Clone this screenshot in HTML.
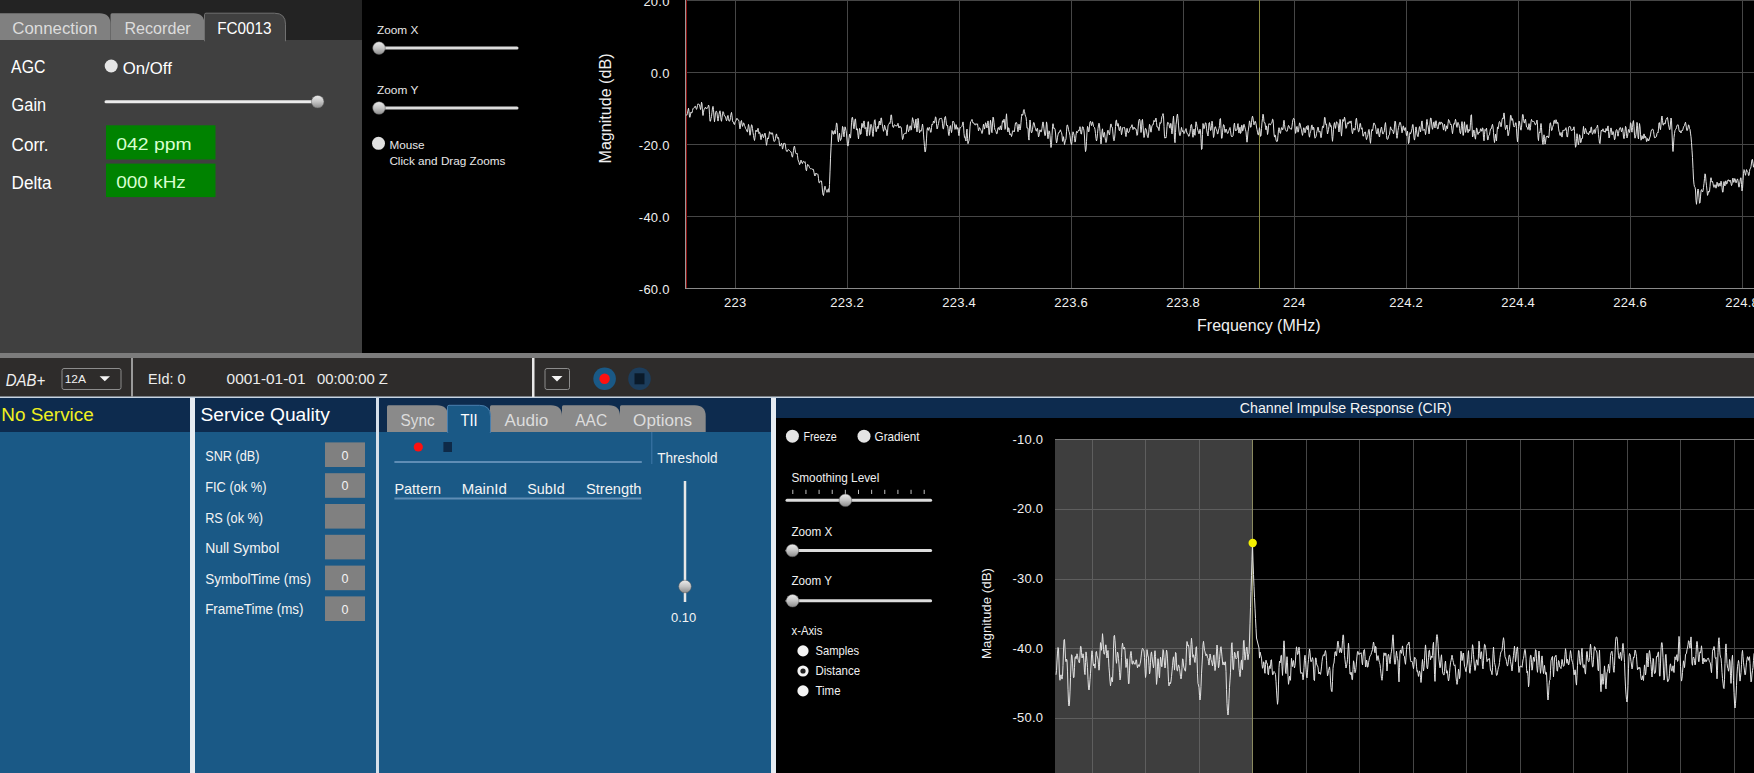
<!DOCTYPE html>
<html><head><meta charset="utf-8"><title>DAB</title>
<style>
*{margin:0;padding:0}
html,body{width:1754px;height:773px;overflow:hidden;background:#000}
svg{display:block;font-family:"Liberation Sans", sans-serif}
</style></head><body>
<svg width="1754" height="773" viewBox="0 0 1754 773">
<defs>
<linearGradient id="thumbg" x1="0" y1="0" x2="0" y2="1">
<stop offset="0" stop-color="#ececec"/><stop offset="0.5" stop-color="#c4c4c4"/><stop offset="1" stop-color="#8c8c8c"/>
</linearGradient>
<clipPath id="topclip"><rect x="686" y="0" width="1068" height="289"/></clipPath>
<clipPath id="circlip"><rect x="1055" y="439" width="699" height="334"/></clipPath>
</defs>
<rect x="0" y="0" width="362" height="40" fill="#232323"/>
<rect x="0" y="40" width="362" height="313" fill="#404040"/>
<path d="M-10,40 L-10,14.7 Q-10,13.2 -8.5,13.2 L99.5,13.2 Q110.5,13.2 110.5,24.2 L110.5,40 Z" fill="#808080"/>
<path d="M110.5,40 L110.5,14.7 Q110.5,13.2 112.0,13.2 L193.5,13.2 Q204.5,13.2 204.5,24.2 L204.5,40 Z" fill="#808080"/>
<path d="M204.5,41 L204.5,14.7 Q204.5,13.2 206.0,13.2 L274.5,13.2 Q285.5,13.2 285.5,24.2 L285.5,41 Z" fill="#404040" stroke="#707070" stroke-width="1"/>
<rect x="205" y="39.5" width="80" height="3" fill="#404040"/>
<text x="12.3" y="34.2" font-size="16.8" fill="#dcdcdc" textLength="85.2" lengthAdjust="spacingAndGlyphs">Connection</text>
<text x="124.5" y="34.2" font-size="16.8" fill="#dcdcdc" textLength="66.2" lengthAdjust="spacingAndGlyphs">Recorder</text>
<text x="217.2" y="34.2" font-size="16.8" fill="#ffffff" textLength="54.4" lengthAdjust="spacingAndGlyphs">FC0013</text>
<text x="11.1" y="73.2" font-size="18.7" fill="#fff" textLength="34.3" lengthAdjust="spacingAndGlyphs">AGC</text>
<circle cx="111.2" cy="66.0" r="6.5" fill="#e6e6e6"/>
<text x="122.8" y="73.7" font-size="15.6" fill="#fff" textLength="49" lengthAdjust="spacingAndGlyphs">On/Off</text>
<text x="11.6" y="111" font-size="18.7" fill="#fff" textLength="34.5" lengthAdjust="spacingAndGlyphs">Gain</text>
<line x1="106" y1="101.7" x2="312" y2="101.7" stroke="#ececec" stroke-width="3" stroke-linecap="round"/><circle cx="317.7" cy="101.7" r="6.3" fill="url(#thumbg)" stroke="#5a5a5a" stroke-width="0.5"/>
<text x="11.6" y="151.3" font-size="18.7" fill="#fff" textLength="37" lengthAdjust="spacingAndGlyphs">Corr.</text>
<text x="11.6" y="188.9" font-size="18.7" fill="#fff" textLength="40" lengthAdjust="spacingAndGlyphs">Delta</text>
<rect x="106" y="125.3" width="109.5" height="34.2" fill="#008200"/>
<rect x="106" y="163.6" width="109.5" height="33.5" fill="#008200"/>
<text x="116.3" y="149.9" font-size="17.2" fill="#d8ffd0" textLength="75.3" lengthAdjust="spacingAndGlyphs">042 ppm</text>
<text x="116.3" y="187.5" font-size="17.2" fill="#d8ffd0" textLength="69.5" lengthAdjust="spacingAndGlyphs">000 kHz</text>
<rect x="362" y="0" width="1392" height="353" fill="#000000"/>
<text x="377" y="34" font-size="11.6" fill="#e8e8e8" textLength="41.4" lengthAdjust="spacingAndGlyphs">Zoom X</text>
<line x1="385" y1="48.1" x2="517" y2="48.1" stroke="#dcdcdc" stroke-width="3" stroke-linecap="round"/><circle cx="379" cy="48.1" r="6.3" fill="url(#thumbg)" stroke="#5a5a5a" stroke-width="0.5"/>
<text x="377" y="93.7" font-size="11.6" fill="#e8e8e8" textLength="41.4" lengthAdjust="spacingAndGlyphs">Zoom Y</text>
<line x1="385" y1="108" x2="517" y2="108" stroke="#dcdcdc" stroke-width="3" stroke-linecap="round"/><circle cx="379" cy="108" r="6.3" fill="url(#thumbg)" stroke="#5a5a5a" stroke-width="0.5"/>
<circle cx="378.5" cy="143.3" r="6.5" fill="#e0e0e0"/>
<text x="389.4" y="148.5" font-size="11.6" fill="#e8e8e8" textLength="35.2" lengthAdjust="spacingAndGlyphs">Mouse</text>
<text x="389.4" y="164.5" font-size="11.6" fill="#e8e8e8" textLength="116" lengthAdjust="spacingAndGlyphs">Click and Drag Zooms</text>
<line x1="735.5" y1="0" x2="735.5" y2="288" stroke="#464646" stroke-width="1"/><line x1="847.5" y1="0" x2="847.5" y2="288" stroke="#464646" stroke-width="1"/><line x1="959.5" y1="0" x2="959.5" y2="288" stroke="#464646" stroke-width="1"/><line x1="1071.5" y1="0" x2="1071.5" y2="288" stroke="#464646" stroke-width="1"/><line x1="1183.5" y1="0" x2="1183.5" y2="288" stroke="#464646" stroke-width="1"/><line x1="1294.5" y1="0" x2="1294.5" y2="288" stroke="#464646" stroke-width="1"/><line x1="1406.5" y1="0" x2="1406.5" y2="288" stroke="#464646" stroke-width="1"/><line x1="1518.5" y1="0" x2="1518.5" y2="288" stroke="#464646" stroke-width="1"/><line x1="1630.5" y1="0" x2="1630.5" y2="288" stroke="#464646" stroke-width="1"/><line x1="1742.5" y1="0" x2="1742.5" y2="288" stroke="#464646" stroke-width="1"/><line x1="686" y1="0.5" x2="1754" y2="0.5" stroke="#464646" stroke-width="1"/><line x1="686" y1="72.5" x2="1754" y2="72.5" stroke="#464646" stroke-width="1"/><line x1="686" y1="144.5" x2="1754" y2="144.5" stroke="#464646" stroke-width="1"/><line x1="686" y1="216.5" x2="1754" y2="216.5" stroke="#464646" stroke-width="1"/><line x1="686" y1="288.5" x2="1754" y2="288.5" stroke="#8a8a8a" stroke-width="1"/>
<line x1="685.5" y1="0" x2="685.5" y2="289" stroke="#9a9a9a" stroke-width="1"/>
<line x1="686.5" y1="0" x2="686.5" y2="288" stroke="#8a1010" stroke-width="1"/>
<line x1="1259.5" y1="0" x2="1259.5" y2="288" stroke="#8a8a40" stroke-width="1"/>
<polyline points="686.0,114.5 686.5,115.3 687.0,114.8 687.5,113.3 688.0,110.2 688.5,108.2 689.0,111.6 689.5,117.0 690.0,117.4 690.5,113.8 691.0,112.1 691.5,113.0 692.0,112.8 692.5,110.6 693.0,108.6 693.5,108.1 694.0,108.1 694.5,107.5 695.0,106.2 695.5,106.3 696.0,108.2 696.5,109.4 697.0,108.1 697.5,105.4 698.0,103.7 698.5,104.1 699.0,104.7 699.5,104.8 700.0,107.0 700.5,109.5 701.0,107.2 701.5,102.2 702.0,103.9 702.5,111.9 703.0,115.5 703.5,112.3 704.0,109.3 704.5,109.1 705.0,108.0 705.5,107.1 706.0,108.0 706.5,109.0 707.0,108.4 707.5,108.0 708.0,107.2 708.5,105.0 709.0,106.2 709.5,114.2 710.0,121.3 710.5,121.1 711.0,118.6 711.5,116.6 712.0,112.4 712.5,107.8 713.0,106.4 713.5,109.5 714.0,117.1 714.5,121.8 715.0,118.0 715.5,112.6 716.0,111.3 716.5,111.3 717.0,112.9 717.5,118.3 718.0,121.1 718.5,118.3 719.0,114.5 719.5,111.9 720.0,110.8 720.5,114.1 721.0,119.8 721.5,121.3 722.0,117.7 722.5,113.6 723.0,111.6 723.5,112.3 724.0,114.7 724.5,116.0 725.0,116.1 725.5,116.9 726.0,119.0 726.5,120.8 727.0,119.5 727.5,115.9 728.0,115.4 728.5,118.5 729.0,121.1 729.5,121.2 730.0,120.1 730.5,117.5 731.0,114.1 731.5,112.4 732.0,115.7 732.5,120.8 733.0,122.1 733.5,122.2 734.0,124.2 734.5,124.5 735.0,122.2 735.5,121.3 736.0,120.5 736.5,118.8 737.0,118.2 737.5,119.4 738.0,120.0 738.5,119.9 739.0,121.4 739.5,125.9 740.0,128.9 740.5,125.9 741.0,121.2 741.5,120.5 742.0,124.0 742.5,126.4 743.0,125.1 743.5,122.8 744.0,123.6 744.5,125.6 745.0,126.7 745.5,128.4 746.0,129.2 746.5,129.8 747.0,131.7 747.5,131.9 748.0,127.8 748.5,124.4 749.0,126.5 749.5,132.1 750.0,135.3 750.5,132.9 751.0,128.0 751.5,124.8 752.0,125.2 752.5,128.7 753.0,132.5 753.5,135.3 754.0,138.5 754.5,140.5 755.0,137.5 755.5,132.4 756.0,130.0 756.5,130.7 757.0,131.8 757.5,130.2 758.0,128.3 758.5,130.7 759.0,133.7 759.5,132.4 760.0,132.6 760.5,137.2 761.0,139.7 761.5,137.2 762.0,134.2 762.5,134.3 763.0,136.5 763.5,137.7 764.0,136.1 764.5,133.8 765.0,133.1 765.5,135.9 766.0,141.6 766.5,145.3 767.0,142.6 767.5,138.0 768.0,138.2 768.5,138.9 769.0,135.2 769.5,131.7 770.0,132.2 770.5,133.7 771.0,134.4 771.5,134.0 772.0,132.6 772.5,133.1 773.0,135.6 773.5,139.2 774.0,141.4 774.5,141.3 775.0,140.5 775.5,138.4 776.0,135.1 776.5,133.9 777.0,136.3 777.5,138.3 778.0,138.0 778.5,137.5 779.0,140.6 779.5,144.9 780.0,146.1 780.5,145.6 781.0,144.3 781.5,143.2 782.0,145.6 782.5,149.1 783.0,147.5 783.5,143.7 784.0,143.0 784.5,143.4 785.0,143.3 785.5,146.1 786.0,149.7 786.5,151.1 787.0,151.7 787.5,151.2 788.0,149.7 788.5,149.5 789.0,150.3 789.5,150.5 790.0,151.2 790.5,151.6 791.0,151.8 791.5,153.5 792.0,156.3 792.5,157.2 793.0,154.2 793.5,150.3 794.0,147.0 794.5,146.1 795.0,149.1 795.5,152.4 796.0,153.6 796.5,153.4 797.0,153.0 797.5,155.6 798.0,159.8 798.5,161.0 799.0,162.3 799.5,164.7 800.0,164.1 800.5,161.5 801.0,160.1 801.5,161.1 802.0,163.2 802.5,163.5 803.0,161.7 803.5,161.3 804.0,162.1 804.5,162.3 805.0,161.7 805.5,164.4 806.0,169.7 806.5,170.8 807.0,167.2 807.5,164.5 808.0,164.5 808.5,165.0 809.0,166.2 809.5,167.5 810.0,168.4 810.5,168.7 811.0,168.5 811.5,168.7 812.0,169.3 812.5,169.3 813.0,168.9 813.5,169.9 814.0,172.5 814.5,175.0 815.0,176.0 815.5,174.4 816.0,173.0 816.5,173.8 817.0,174.4 817.5,173.8 818.0,174.7 818.5,178.7 819.0,182.7 819.5,182.8 820.0,181.2 820.5,181.1 821.0,181.0 821.5,181.0 822.0,185.3 822.5,191.0 823.0,194.6 823.5,195.5 824.0,192.3 824.5,187.4 825.0,186.2 825.5,188.6 826.0,189.9 826.5,190.9 827.0,192.4 827.5,191.8 828.0,189.1 828.5,188.8 829.0,192.3 829.5,184.5 830.0,171.9 830.5,158.2 831.0,147.8 831.5,139.0 832.0,130.5 832.5,131.8 833.0,134.0 833.5,134.3 834.0,131.2 834.5,130.6 835.0,134.0 835.5,133.6 836.0,127.4 836.5,122.9 837.0,124.0 837.5,130.6 838.0,139.5 838.5,141.9 839.0,136.0 839.5,133.2 840.0,138.1 840.5,140.5 841.0,139.3 841.5,137.7 842.0,132.8 842.5,126.4 843.0,127.2 843.5,134.3 844.0,136.8 844.5,131.5 845.0,126.8 845.5,128.0 846.0,130.5 846.5,133.9 847.0,140.0 847.5,145.3 848.0,146.1 848.5,143.3 849.0,137.8 849.5,134.1 850.0,136.8 850.5,138.1 851.0,131.9 851.5,122.8 852.0,117.8 852.5,117.2 853.0,120.8 853.5,126.8 854.0,128.8 854.5,124.9 855.0,119.3 855.5,119.0 856.0,125.1 856.5,130.1 857.0,128.8 857.5,128.9 858.0,135.4 858.5,138.9 859.0,134.0 859.5,128.4 860.0,129.5 860.5,134.4 861.0,134.0 861.5,126.9 862.0,123.3 862.5,126.3 863.0,127.6 863.5,123.6 864.0,120.9 864.5,124.3 865.0,128.8 865.5,128.2 866.0,127.4 866.5,132.8 867.0,136.1 867.5,129.9 868.0,121.7 868.5,121.8 869.0,129.4 869.5,135.4 870.0,132.8 870.5,126.3 871.0,124.3 871.5,125.4 872.0,127.9 872.5,133.6 873.0,136.5 873.5,131.4 874.0,124.6 874.5,120.3 875.0,119.7 875.5,125.4 876.0,131.8 876.5,131.4 877.0,127.5 877.5,126.5 878.0,128.7 878.5,127.4 879.0,121.9 879.5,121.0 880.0,125.0 880.5,123.6 881.0,117.9 881.5,118.1 882.0,123.1 882.5,126.2 883.0,128.8 883.5,131.3 884.0,129.1 884.5,125.2 885.0,126.8 885.5,129.5 886.0,129.3 886.5,131.9 887.0,135.7 887.5,132.4 888.0,125.9 888.5,124.6 889.0,124.2 889.5,122.8 890.0,123.5 890.5,120.6 891.0,114.8 891.5,115.1 892.0,120.5 892.5,124.6 893.0,127.2 893.5,127.4 894.0,125.8 894.5,124.7 895.0,125.0 895.5,125.8 896.0,125.6 896.5,125.8 897.0,126.2 897.5,124.3 898.0,123.3 898.5,126.0 899.0,128.0 899.5,126.7 900.0,126.2 900.5,127.1 901.0,127.1 901.5,129.2 902.0,135.0 902.5,139.5 903.0,138.5 903.5,135.3 904.0,133.8 904.5,133.7 905.0,133.2 905.5,133.2 906.0,133.8 906.5,131.0 907.0,125.1 907.5,124.8 908.0,129.3 908.5,131.7 909.0,130.5 909.5,128.4 910.0,125.7 910.5,126.1 911.0,130.2 911.5,129.7 912.0,122.6 912.5,117.7 913.0,119.5 913.5,121.7 914.0,123.6 914.5,128.0 915.0,128.0 915.5,120.9 916.0,119.1 916.5,127.1 917.0,131.9 917.5,125.8 918.0,118.3 918.5,120.3 919.0,128.7 919.5,132.8 920.0,131.5 920.5,130.5 921.0,131.3 921.5,130.8 922.0,127.1 922.5,124.0 923.0,127.2 923.5,134.1 924.0,140.4 924.5,146.7 925.0,152.0 925.5,151.6 926.0,146.4 926.5,138.9 927.0,130.3 927.5,127.7 928.0,130.3 928.5,130.2 929.0,127.4 929.5,127.5 930.0,129.3 930.5,132.1 931.0,132.4 931.5,127.7 932.0,124.1 932.5,124.7 933.0,123.5 933.5,121.0 934.0,122.4 934.5,122.8 935.0,120.0 935.5,116.8 936.0,117.8 936.5,123.7 937.0,129.0 937.5,128.4 938.0,125.4 938.5,123.7 939.0,120.6 939.5,118.7 940.0,118.6 940.5,118.5 941.0,118.2 941.5,118.3 942.0,119.6 942.5,123.8 943.0,128.7 943.5,128.9 944.0,125.0 944.5,120.2 945.0,116.9 945.5,116.5 946.0,120.4 946.5,125.2 947.0,125.8 947.5,125.1 948.0,128.5 948.5,134.2 949.0,135.6 949.5,131.6 950.0,126.3 950.5,125.6 951.0,129.8 951.5,132.6 952.0,129.5 952.5,123.4 953.0,121.0 953.5,121.8 954.0,122.6 954.5,125.1 955.0,129.4 955.5,128.6 956.0,124.6 956.5,125.9 957.0,129.3 957.5,127.7 958.0,127.7 958.5,133.4 959.0,135.7 959.5,131.1 960.0,127.4 960.5,127.6 961.0,127.3 961.5,126.8 962.0,126.3 962.5,124.2 963.0,121.9 963.5,125.5 964.0,133.6 964.5,137.4 965.0,136.8 965.5,139.8 966.0,141.0 966.5,132.2 967.0,129.1 967.5,138.5 968.0,143.7 968.5,141.8 969.0,140.7 969.5,136.0 970.0,126.9 970.5,122.0 971.0,121.6 971.5,120.4 972.0,119.4 972.5,121.4 973.0,123.1 973.5,122.9 974.0,123.1 974.5,124.4 975.0,125.2 975.5,124.8 976.0,123.6 976.5,124.2 977.0,124.4 977.5,123.8 978.0,127.3 978.5,130.9 979.0,129.5 979.5,127.6 980.0,128.5 980.5,129.4 981.0,130.5 981.5,131.8 982.0,133.5 982.5,132.4 983.0,127.6 983.5,124.2 984.0,126.4 984.5,129.1 985.0,126.5 985.5,122.8 986.0,123.2 986.5,126.9 987.0,127.9 987.5,124.4 988.0,120.9 988.5,125.7 989.0,134.6 989.5,134.3 990.0,125.8 990.5,120.3 991.0,124.1 991.5,131.8 992.0,132.7 992.5,123.9 993.0,117.1 993.5,117.9 994.0,122.8 994.5,127.6 995.0,129.9 995.5,130.4 996.0,131.6 996.5,133.7 997.0,133.8 997.5,131.1 998.0,127.7 998.5,127.6 999.0,129.6 999.5,129.7 1000.0,126.8 1000.5,125.8 1001.0,129.3 1001.5,130.0 1002.0,124.4 1002.5,120.7 1003.0,122.2 1003.5,122.1 1004.0,119.2 1004.5,122.1 1005.0,129.4 1005.5,128.6 1006.0,118.8 1006.5,113.8 1007.0,121.1 1007.5,130.6 1008.0,131.9 1008.5,127.7 1009.0,128.4 1009.5,133.4 1010.0,135.0 1010.5,133.7 1011.0,134.5 1011.5,136.5 1012.0,134.6 1012.5,131.3 1013.0,130.6 1013.5,131.1 1014.0,132.0 1014.5,131.0 1015.0,126.3 1015.5,122.9 1016.0,122.8 1016.5,122.5 1017.0,124.2 1017.5,129.4 1018.0,131.7 1018.5,128.1 1019.0,124.2 1019.5,126.3 1020.0,130.0 1020.5,128.4 1021.0,122.7 1021.5,116.7 1022.0,114.0 1022.5,115.3 1023.0,114.4 1023.5,110.3 1024.0,109.5 1024.5,111.6 1025.0,114.3 1025.5,116.2 1026.0,117.1 1026.5,121.4 1027.0,128.2 1027.5,128.1 1028.0,128.2 1028.5,137.6 1029.0,140.1 1029.5,128.1 1030.0,120.0 1030.5,124.9 1031.0,131.0 1031.5,132.9 1032.0,131.9 1032.5,129.3 1033.0,125.8 1033.5,122.7 1034.0,122.5 1034.5,125.0 1035.0,127.3 1035.5,128.6 1036.0,130.5 1036.5,131.2 1037.0,128.7 1037.5,128.2 1038.0,132.6 1038.5,136.9 1039.0,135.8 1039.5,131.7 1040.0,129.8 1040.5,131.0 1041.0,132.1 1041.5,131.2 1042.0,128.2 1042.5,123.9 1043.0,121.9 1043.5,124.2 1044.0,128.9 1044.5,133.0 1045.0,135.7 1045.5,135.1 1046.0,129.1 1046.5,121.9 1047.0,124.5 1047.5,134.9 1048.0,138.7 1048.5,134.4 1049.0,130.8 1049.5,131.3 1050.0,135.2 1050.5,142.6 1051.0,147.5 1051.5,144.5 1052.0,135.7 1052.5,126.8 1053.0,123.7 1053.5,126.5 1054.0,128.8 1054.5,128.3 1055.0,129.2 1055.5,133.0 1056.0,139.0 1056.5,143.0 1057.0,141.2 1057.5,137.2 1058.0,134.8 1058.5,132.8 1059.0,132.1 1059.5,132.4 1060.0,130.6 1060.5,129.8 1061.0,132.0 1061.5,132.5 1062.0,135.1 1062.5,141.3 1063.0,140.9 1063.5,136.7 1064.0,140.2 1064.5,144.6 1065.0,142.0 1065.5,140.4 1066.0,138.8 1066.5,131.8 1067.0,125.2 1067.5,125.0 1068.0,126.8 1068.5,129.3 1069.0,131.7 1069.5,132.9 1070.0,135.7 1070.5,140.0 1071.0,143.3 1071.5,144.6 1072.0,141.6 1072.5,135.3 1073.0,131.8 1073.5,133.1 1074.0,134.9 1074.5,138.3 1075.0,142.1 1075.5,141.0 1076.0,135.3 1076.5,131.4 1077.0,132.2 1077.5,132.7 1078.0,131.1 1078.5,130.3 1079.0,131.0 1079.5,128.5 1080.0,126.7 1080.5,129.6 1081.0,134.0 1081.5,134.0 1082.0,129.9 1082.5,126.8 1083.0,126.9 1083.5,128.4 1084.0,130.9 1084.5,137.0 1085.0,145.7 1085.5,151.6 1086.0,149.7 1086.5,141.4 1087.0,132.1 1087.5,126.4 1088.0,127.6 1088.5,131.9 1089.0,131.4 1089.5,126.1 1090.0,122.1 1090.5,121.3 1091.0,123.0 1091.5,125.6 1092.0,124.3 1092.5,121.8 1093.0,123.5 1093.5,126.5 1094.0,127.1 1094.5,127.5 1095.0,129.5 1095.5,133.7 1096.0,138.6 1096.5,141.0 1097.0,138.7 1097.5,133.7 1098.0,128.6 1098.5,124.8 1099.0,123.2 1099.5,125.1 1100.0,131.6 1100.5,139.6 1101.0,143.9 1101.5,140.2 1102.0,131.1 1102.5,128.8 1103.0,135.2 1103.5,137.2 1104.0,132.6 1104.5,132.5 1105.0,137.0 1105.5,140.4 1106.0,142.5 1106.5,141.5 1107.0,136.2 1107.5,131.1 1108.0,130.2 1108.5,131.5 1109.0,133.7 1109.5,135.0 1110.0,131.1 1110.5,125.2 1111.0,123.9 1111.5,126.4 1112.0,127.0 1112.5,128.2 1113.0,134.2 1113.5,139.6 1114.0,140.8 1114.5,138.8 1115.0,133.9 1115.5,126.5 1116.0,120.4 1116.5,120.1 1117.0,124.9 1117.5,126.2 1118.0,123.4 1118.5,124.9 1119.0,129.9 1119.5,130.8 1120.0,127.7 1120.5,126.4 1121.0,130.4 1121.5,134.7 1122.0,132.5 1122.5,128.1 1123.0,127.4 1123.5,128.1 1124.0,127.5 1124.5,127.4 1125.0,130.0 1125.5,134.5 1126.0,136.6 1126.5,132.5 1127.0,128.3 1127.5,130.1 1128.0,132.6 1128.5,132.6 1129.0,131.9 1129.5,130.6 1130.0,128.1 1130.5,127.4 1131.0,127.5 1131.5,125.9 1132.0,124.7 1132.5,126.8 1133.0,129.6 1133.5,128.6 1134.0,127.1 1134.5,127.9 1135.0,129.0 1135.5,128.8 1136.0,129.0 1136.5,131.8 1137.0,135.4 1137.5,134.9 1138.0,129.1 1138.5,123.1 1139.0,120.1 1139.5,119.1 1140.0,120.8 1140.5,126.9 1141.0,132.5 1141.5,129.1 1142.0,120.5 1142.5,119.4 1143.0,125.6 1143.5,133.1 1144.0,137.5 1144.5,135.8 1145.0,130.7 1145.5,128.3 1146.0,129.0 1146.5,131.1 1147.0,134.3 1147.5,136.7 1148.0,137.7 1148.5,135.2 1149.0,129.4 1149.5,124.3 1150.0,125.2 1150.5,130.0 1151.0,132.2 1151.5,128.9 1152.0,125.5 1152.5,125.1 1153.0,125.1 1153.5,122.8 1154.0,120.4 1154.5,121.5 1155.0,121.8 1155.5,119.1 1156.0,118.1 1156.5,122.4 1157.0,127.0 1157.5,127.1 1158.0,126.8 1158.5,129.4 1159.0,130.6 1159.5,126.2 1160.0,122.5 1160.5,123.4 1161.0,123.1 1161.5,119.2 1162.0,116.3 1162.5,115.6 1163.0,113.6 1163.5,115.6 1164.0,126.3 1164.5,136.7 1165.0,138.2 1165.5,137.1 1166.0,137.8 1166.5,134.2 1167.0,126.7 1167.5,122.4 1168.0,122.4 1168.5,122.8 1169.0,124.3 1169.5,127.4 1170.0,128.2 1170.5,123.6 1171.0,123.4 1171.5,130.6 1172.0,133.9 1172.5,128.9 1173.0,120.5 1173.5,116.1 1174.0,124.2 1174.5,139.7 1175.0,142.7 1175.5,132.6 1176.0,124.7 1176.5,121.0 1177.0,115.8 1177.5,114.0 1178.0,118.6 1178.5,125.1 1179.0,131.0 1179.5,134.9 1180.0,135.7 1180.5,134.6 1181.0,130.5 1181.5,127.4 1182.0,130.0 1182.5,131.7 1183.0,130.6 1183.5,131.8 1184.0,133.6 1184.5,132.7 1185.0,131.1 1185.5,129.5 1186.0,128.6 1186.5,130.8 1187.0,133.5 1187.5,133.6 1188.0,134.0 1188.5,136.1 1189.0,136.4 1189.5,134.7 1190.0,132.3 1190.5,128.6 1191.0,124.9 1191.5,124.4 1192.0,128.0 1192.5,134.3 1193.0,137.3 1193.5,132.4 1194.0,129.0 1194.5,133.9 1195.0,135.3 1195.5,127.5 1196.0,121.8 1196.5,123.3 1197.0,126.5 1197.5,128.9 1198.0,130.6 1198.5,132.5 1199.0,133.8 1199.5,132.0 1200.0,129.2 1200.5,130.4 1201.0,138.8 1201.5,149.5 1202.0,149.0 1202.5,134.4 1203.0,123.5 1203.5,125.7 1204.0,128.7 1204.5,126.8 1205.0,124.7 1205.5,122.7 1206.0,123.3 1206.5,128.2 1207.0,132.0 1207.5,134.6 1208.0,136.0 1208.5,130.3 1209.0,123.0 1209.5,122.5 1210.0,126.6 1210.5,130.5 1211.0,130.2 1211.5,125.5 1212.0,121.2 1212.5,123.4 1213.0,131.8 1213.5,137.5 1214.0,135.6 1214.5,130.1 1215.0,126.9 1215.5,126.8 1216.0,128.8 1216.5,129.8 1217.0,131.5 1217.5,134.1 1218.0,133.3 1218.5,130.1 1219.0,128.6 1219.5,125.7 1220.0,118.9 1220.5,118.6 1221.0,128.4 1221.5,138.2 1222.0,138.3 1222.5,132.8 1223.0,127.5 1223.5,124.6 1224.0,125.0 1224.5,128.6 1225.0,132.5 1225.5,131.1 1226.0,129.0 1226.5,130.1 1227.0,132.1 1227.5,133.4 1228.0,133.3 1228.5,131.6 1229.0,130.2 1229.5,128.5 1230.0,127.5 1230.5,130.7 1231.0,134.8 1231.5,136.5 1232.0,136.5 1232.5,136.5 1233.0,135.7 1233.5,131.9 1234.0,125.0 1234.5,123.0 1235.0,127.8 1235.5,130.9 1236.0,130.4 1236.5,130.1 1237.0,130.0 1237.5,125.6 1238.0,123.6 1238.5,129.6 1239.0,133.1 1239.5,128.3 1240.0,127.3 1240.5,133.5 1241.0,132.7 1241.5,125.4 1242.0,125.2 1242.5,130.9 1243.0,130.7 1243.5,126.0 1244.0,124.3 1244.5,125.8 1245.0,127.9 1245.5,129.8 1246.0,131.9 1246.5,137.8 1247.0,142.2 1247.5,138.0 1248.0,131.8 1248.5,129.1 1249.0,125.1 1249.5,120.9 1250.0,122.8 1250.5,127.2 1251.0,127.2 1251.5,122.5 1252.0,118.0 1252.5,116.1 1253.0,118.1 1253.5,122.4 1254.0,124.8 1254.5,123.5 1255.0,121.3 1255.5,121.6 1256.0,123.9 1256.5,127.0 1257.0,129.5 1257.5,132.2 1258.0,134.7 1258.5,134.8 1259.0,131.3 1259.5,127.7 1260.0,130.6 1260.5,136.4 1261.0,135.5 1261.5,128.5 1262.0,122.5 1262.5,118.4 1263.0,114.2 1263.5,116.1 1264.0,121.7 1264.5,122.9 1265.0,122.7 1265.5,127.6 1266.0,129.8 1266.5,125.9 1267.0,128.3 1267.5,134.5 1268.0,132.4 1268.5,125.7 1269.0,123.5 1269.5,123.9 1270.0,124.7 1270.5,124.8 1271.0,123.4 1271.5,123.1 1272.0,122.2 1272.5,119.2 1273.0,119.5 1273.5,126.0 1274.0,133.9 1274.5,137.1 1275.0,134.9 1275.5,135.8 1276.0,140.0 1276.5,141.4 1277.0,141.7 1277.5,141.0 1278.0,135.6 1278.5,129.7 1279.0,127.7 1279.5,129.2 1280.0,133.0 1280.5,133.4 1281.0,130.3 1281.5,127.7 1282.0,127.8 1282.5,129.9 1283.0,129.1 1283.5,123.3 1284.0,120.3 1284.5,124.4 1285.0,128.0 1285.5,129.8 1286.0,130.6 1286.5,131.2 1287.0,131.4 1287.5,129.9 1288.0,127.1 1288.5,125.4 1289.0,126.1 1289.5,127.8 1290.0,128.7 1290.5,128.8 1291.0,129.2 1291.5,129.3 1292.0,126.3 1292.5,122.3 1293.0,119.7 1293.5,118.4 1294.0,118.6 1294.5,120.4 1295.0,127.0 1295.5,133.4 1296.0,131.9 1296.5,127.1 1297.0,126.4 1297.5,129.5 1298.0,132.2 1298.5,131.2 1299.0,126.5 1299.5,123.0 1300.0,123.3 1300.5,125.9 1301.0,128.2 1301.5,129.7 1302.0,133.4 1302.5,135.4 1303.0,132.6 1303.5,128.0 1304.0,127.7 1304.5,130.6 1305.0,132.8 1305.5,131.9 1306.0,127.9 1306.5,126.4 1307.0,129.0 1307.5,129.6 1308.0,125.4 1308.5,127.2 1309.0,135.0 1309.5,137.2 1310.0,133.7 1310.5,131.8 1311.0,130.1 1311.5,125.5 1312.0,124.9 1312.5,128.7 1313.0,129.8 1313.5,127.1 1314.0,128.5 1314.5,135.0 1315.0,138.2 1315.5,137.5 1316.0,136.4 1316.5,133.7 1317.0,131.2 1317.5,129.2 1318.0,127.1 1318.5,129.0 1319.0,132.2 1319.5,131.4 1320.0,131.1 1320.5,134.9 1321.0,137.7 1321.5,135.8 1322.0,130.1 1322.5,126.3 1323.0,126.5 1323.5,127.6 1324.0,124.1 1324.5,117.5 1325.0,117.4 1325.5,123.4 1326.0,124.7 1326.5,123.8 1327.0,129.5 1327.5,134.0 1328.0,132.0 1328.5,129.4 1329.0,126.4 1329.5,122.6 1330.0,123.6 1330.5,126.5 1331.0,125.5 1331.5,128.2 1332.0,136.8 1332.5,141.3 1333.0,136.2 1333.5,129.3 1334.0,124.6 1334.5,122.6 1335.0,125.7 1335.5,128.4 1336.0,125.1 1336.5,121.7 1337.0,122.6 1337.5,123.1 1338.0,123.4 1338.5,128.2 1339.0,132.0 1339.5,127.1 1340.0,119.4 1340.5,121.1 1341.0,131.3 1341.5,136.1 1342.0,130.1 1342.5,121.4 1343.0,119.4 1343.5,121.4 1344.0,120.4 1344.5,117.1 1345.0,119.1 1345.5,125.1 1346.0,128.4 1346.5,127.7 1347.0,124.6 1347.5,122.7 1348.0,123.8 1348.5,123.7 1349.0,121.5 1349.5,121.7 1350.0,123.2 1350.5,122.4 1351.0,120.9 1351.5,124.8 1352.0,131.5 1352.5,133.7 1353.0,130.9 1353.5,128.5 1354.0,128.3 1354.5,129.8 1355.0,130.2 1355.5,125.6 1356.0,119.2 1356.5,118.2 1357.0,123.0 1357.5,126.9 1358.0,129.5 1358.5,131.8 1359.0,131.5 1359.5,127.7 1360.0,123.4 1360.5,123.6 1361.0,127.7 1361.5,129.2 1362.0,127.7 1362.5,130.8 1363.0,136.2 1363.5,136.0 1364.0,133.5 1364.5,133.2 1365.0,131.9 1365.5,132.1 1366.0,137.2 1366.5,139.6 1367.0,137.8 1367.5,136.7 1368.0,134.4 1368.5,130.4 1369.0,129.4 1369.5,133.0 1370.0,140.1 1370.5,143.3 1371.0,137.6 1371.5,130.7 1372.0,129.4 1372.5,130.8 1373.0,128.3 1373.5,124.1 1374.0,122.9 1374.5,124.0 1375.0,124.9 1375.5,126.2 1376.0,129.9 1376.5,133.6 1377.0,134.1 1377.5,131.5 1378.0,128.4 1378.5,130.3 1379.0,135.7 1379.5,137.0 1380.0,133.5 1380.5,131.0 1381.0,128.6 1381.5,127.0 1382.0,129.8 1382.5,133.5 1383.0,134.1 1383.5,132.7 1384.0,132.3 1384.5,130.2 1385.0,124.8 1385.5,122.6 1386.0,127.8 1386.5,135.7 1387.0,139.1 1387.5,139.4 1388.0,138.7 1388.5,136.2 1389.0,135.1 1389.5,134.5 1390.0,130.4 1390.5,126.8 1391.0,128.5 1391.5,129.9 1392.0,130.0 1392.5,130.1 1393.0,131.6 1393.5,133.8 1394.0,132.0 1394.5,126.1 1395.0,121.1 1395.5,121.8 1396.0,127.9 1396.5,135.4 1397.0,138.3 1397.5,135.3 1398.0,130.6 1398.5,127.5 1399.0,125.5 1399.5,123.2 1400.0,122.2 1400.5,123.1 1401.0,125.4 1401.5,129.1 1402.0,132.8 1402.5,131.4 1403.0,126.3 1403.5,126.0 1404.0,129.8 1404.5,130.4 1405.0,127.7 1405.5,127.8 1406.0,132.6 1406.5,135.6 1407.0,133.1 1407.5,131.2 1408.0,136.6 1408.5,143.6 1409.0,142.5 1409.5,135.4 1410.0,132.5 1410.5,133.9 1411.0,132.8 1411.5,130.9 1412.0,128.6 1412.5,124.8 1413.0,124.4 1413.5,131.0 1414.0,137.9 1414.5,140.1 1415.0,137.1 1415.5,130.3 1416.0,126.9 1416.5,129.8 1417.0,133.9 1417.5,135.9 1418.0,136.7 1418.5,134.2 1419.0,129.2 1419.5,126.6 1420.0,129.0 1420.5,132.0 1421.0,129.3 1421.5,123.0 1422.0,120.9 1422.5,126.1 1423.0,130.6 1423.5,130.1 1424.0,129.3 1424.5,129.4 1425.0,131.0 1425.5,134.6 1426.0,131.6 1426.5,121.5 1427.0,119.4 1427.5,124.3 1428.0,125.7 1428.5,129.1 1429.0,133.9 1429.5,131.0 1430.0,122.9 1430.5,118.1 1431.0,118.0 1431.5,121.9 1432.0,127.2 1432.5,129.3 1433.0,127.0 1433.5,122.4 1434.0,121.8 1434.5,126.5 1435.0,127.9 1435.5,123.0 1436.0,120.7 1436.5,123.4 1437.0,126.7 1437.5,128.8 1438.0,129.0 1438.5,126.2 1439.0,122.5 1439.5,122.1 1440.0,124.6 1440.5,123.8 1441.0,121.9 1441.5,123.2 1442.0,123.2 1442.5,123.2 1443.0,127.4 1443.5,130.1 1444.0,126.5 1444.5,124.2 1445.0,127.3 1445.5,131.2 1446.0,129.4 1446.5,125.8 1447.0,127.9 1447.5,128.7 1448.0,123.5 1448.5,119.5 1449.0,120.3 1449.5,121.2 1450.0,123.2 1450.5,124.8 1451.0,124.2 1451.5,125.7 1452.0,130.6 1452.5,133.7 1453.0,130.0 1453.5,124.8 1454.0,123.5 1454.5,124.3 1455.0,121.8 1455.5,119.3 1456.0,121.5 1456.5,126.4 1457.0,127.4 1457.5,124.1 1458.0,122.4 1458.5,123.5 1459.0,125.1 1459.5,128.3 1460.0,132.5 1460.5,133.7 1461.0,130.6 1461.5,125.2 1462.0,121.6 1462.5,126.2 1463.0,135.5 1463.5,135.1 1464.0,125.4 1464.5,121.8 1465.0,128.0 1465.5,132.4 1466.0,130.7 1466.5,126.0 1467.0,124.6 1467.5,128.9 1468.0,132.7 1468.5,130.8 1469.0,129.3 1469.5,131.1 1470.0,129.9 1470.5,122.8 1471.0,115.1 1471.5,114.8 1472.0,125.7 1472.5,137.0 1473.0,136.0 1473.5,130.4 1474.0,130.0 1474.5,133.3 1475.0,137.8 1475.5,139.2 1476.0,133.6 1476.5,127.9 1477.0,128.9 1477.5,132.8 1478.0,134.5 1478.5,132.9 1479.0,131.9 1479.5,132.7 1480.0,131.6 1480.5,128.9 1481.0,128.7 1481.5,131.0 1482.0,131.3 1482.5,127.8 1483.0,128.8 1483.5,137.3 1484.0,140.8 1484.5,134.6 1485.0,129.5 1485.5,130.4 1486.0,129.7 1486.5,128.1 1487.0,132.8 1487.5,139.7 1488.0,140.0 1488.5,136.4 1489.0,135.3 1489.5,134.8 1490.0,131.6 1490.5,128.9 1491.0,129.2 1491.5,128.7 1492.0,125.7 1492.5,124.3 1493.0,127.0 1493.5,132.3 1494.0,138.9 1494.5,142.5 1495.0,138.5 1495.5,134.2 1496.0,138.6 1496.5,141.0 1497.0,132.8 1497.5,126.9 1498.0,128.9 1498.5,127.6 1499.0,122.8 1499.5,121.5 1500.0,122.3 1500.5,124.6 1501.0,126.8 1501.5,125.1 1502.0,119.9 1502.5,118.3 1503.0,119.0 1503.5,116.3 1504.0,112.9 1504.5,117.0 1505.0,126.1 1505.5,129.6 1506.0,128.4 1506.5,126.0 1507.0,125.0 1507.5,129.4 1508.0,135.8 1508.5,135.2 1509.0,131.1 1509.5,129.1 1510.0,123.1 1510.5,115.4 1511.0,115.3 1511.5,119.7 1512.0,120.5 1512.5,118.6 1513.0,120.9 1513.5,125.5 1514.0,126.9 1514.5,126.7 1515.0,125.5 1515.5,122.9 1516.0,122.7 1516.5,128.6 1517.0,137.0 1517.5,141.8 1518.0,136.8 1518.5,126.4 1519.0,121.0 1519.5,121.7 1520.0,125.8 1520.5,129.3 1521.0,130.2 1521.5,127.7 1522.0,121.0 1522.5,114.7 1523.0,114.4 1523.5,118.4 1524.0,122.2 1524.5,123.1 1525.0,120.3 1525.5,119.2 1526.0,123.0 1526.5,127.0 1527.0,127.1 1527.5,127.6 1528.0,129.6 1528.5,127.1 1529.0,123.6 1529.5,126.5 1530.0,130.3 1530.5,127.6 1531.0,121.7 1531.5,119.4 1532.0,120.7 1532.5,121.7 1533.0,121.2 1533.5,121.6 1534.0,121.5 1534.5,122.5 1535.0,124.6 1535.5,124.8 1536.0,123.8 1536.5,122.6 1537.0,120.1 1537.5,125.1 1538.0,137.5 1538.5,140.6 1539.0,133.8 1539.5,131.9 1540.0,132.7 1540.5,127.3 1541.0,123.5 1541.5,127.7 1542.0,135.7 1542.5,142.4 1543.0,144.5 1543.5,139.4 1544.0,134.8 1544.5,138.4 1545.0,144.1 1545.5,142.6 1546.0,137.8 1546.5,136.4 1547.0,137.1 1547.5,136.1 1548.0,136.0 1548.5,138.0 1549.0,136.2 1549.5,128.8 1550.0,123.2 1550.5,122.8 1551.0,126.2 1551.5,130.5 1552.0,130.3 1552.5,127.3 1553.0,126.1 1553.5,124.7 1554.0,120.5 1554.5,120.4 1555.0,123.5 1555.5,122.7 1556.0,119.7 1556.5,121.1 1557.0,123.7 1557.5,122.2 1558.0,122.8 1558.5,128.1 1559.0,131.2 1559.5,132.7 1560.0,135.6 1560.5,135.2 1561.0,132.4 1561.5,134.5 1562.0,137.1 1562.5,133.7 1563.0,130.1 1563.5,130.4 1564.0,130.5 1564.5,130.2 1565.0,130.3 1565.5,128.6 1566.0,127.7 1566.5,131.5 1567.0,136.5 1567.5,137.1 1568.0,132.8 1568.5,128.2 1569.0,126.6 1569.5,126.6 1570.0,126.3 1570.5,127.2 1571.0,129.6 1571.5,130.9 1572.0,130.2 1572.5,129.8 1573.0,130.0 1573.5,128.1 1574.0,126.8 1574.5,131.7 1575.0,141.3 1575.5,147.3 1576.0,146.0 1576.5,138.6 1577.0,133.7 1577.5,136.9 1578.0,142.9 1578.5,144.7 1579.0,140.4 1579.5,134.7 1580.0,135.9 1580.5,142.5 1581.0,142.5 1581.5,138.5 1582.0,138.8 1582.5,138.4 1583.0,131.0 1583.5,126.4 1584.0,131.1 1584.5,133.9 1585.0,130.4 1585.5,128.4 1586.0,130.1 1586.5,132.3 1587.0,133.6 1587.5,133.1 1588.0,132.9 1588.5,134.8 1589.0,133.6 1589.5,131.3 1590.0,132.7 1590.5,132.3 1591.0,127.2 1591.5,127.1 1592.0,132.5 1592.5,134.3 1593.0,133.1 1593.5,131.9 1594.0,129.6 1594.5,129.8 1595.0,133.5 1595.5,132.4 1596.0,128.2 1596.5,127.6 1597.0,126.9 1597.5,125.0 1598.0,128.5 1598.5,134.5 1599.0,138.8 1599.5,143.0 1600.0,143.6 1600.5,138.0 1601.0,131.7 1601.5,130.0 1602.0,131.3 1602.5,130.3 1603.0,128.8 1603.5,130.9 1604.0,131.9 1604.5,130.9 1605.0,132.4 1605.5,132.1 1606.0,128.4 1606.5,128.9 1607.0,131.0 1607.5,128.2 1608.0,125.9 1608.5,131.5 1609.0,138.0 1609.5,137.2 1610.0,132.9 1610.5,129.6 1611.0,127.9 1611.5,130.0 1612.0,134.9 1612.5,134.2 1613.0,131.5 1613.5,132.2 1614.0,136.0 1614.5,139.8 1615.0,138.8 1615.5,133.9 1616.0,130.6 1616.5,129.6 1617.0,129.9 1617.5,133.6 1618.0,136.2 1618.5,133.6 1619.0,130.5 1619.5,128.8 1620.0,127.6 1620.5,127.7 1621.0,129.6 1621.5,131.9 1622.0,130.1 1622.5,127.8 1623.0,131.2 1623.5,137.0 1624.0,138.7 1624.5,136.4 1625.0,131.5 1625.5,126.3 1626.0,127.3 1626.5,133.8 1627.0,137.9 1627.5,136.5 1628.0,132.5 1628.5,129.5 1629.0,130.4 1629.5,132.5 1630.0,128.7 1630.5,122.7 1631.0,123.9 1631.5,130.5 1632.0,132.2 1632.5,127.6 1633.0,122.0 1633.5,120.6 1634.0,126.6 1634.5,135.2 1635.0,138.2 1635.5,136.8 1636.0,134.4 1636.5,128.9 1637.0,122.4 1637.5,125.6 1638.0,137.0 1638.5,139.0 1639.0,129.6 1639.5,123.5 1640.0,126.9 1640.5,134.2 1641.0,140.2 1641.5,139.2 1642.0,135.7 1642.5,136.6 1643.0,138.9 1643.5,136.8 1644.0,133.9 1644.5,136.1 1645.0,138.1 1645.5,136.4 1646.0,137.5 1646.5,141.5 1647.0,141.3 1647.5,138.6 1648.0,138.9 1648.5,141.0 1649.0,140.1 1649.5,138.0 1650.0,137.0 1650.5,134.9 1651.0,131.7 1651.5,130.1 1652.0,129.9 1652.5,129.1 1653.0,129.3 1653.5,131.3 1654.0,134.7 1654.5,137.7 1655.0,138.0 1655.5,137.2 1656.0,137.0 1656.5,136.2 1657.0,133.2 1657.5,132.5 1658.0,133.0 1658.5,128.9 1659.0,122.8 1659.5,122.7 1660.0,128.0 1660.5,129.7 1661.0,124.9 1661.5,117.9 1662.0,116.0 1662.5,120.3 1663.0,124.9 1663.5,125.1 1664.0,123.0 1664.5,123.2 1665.0,124.1 1665.5,122.0 1666.0,119.4 1666.5,119.0 1667.0,117.9 1667.5,117.4 1668.0,121.0 1668.5,124.8 1669.0,127.0 1669.5,129.8 1670.0,129.3 1670.5,123.0 1671.0,118.0 1671.5,120.2 1672.0,131.9 1672.5,146.3 1673.0,151.5 1673.5,145.1 1674.0,137.5 1674.5,133.5 1675.0,130.5 1675.5,129.5 1676.0,129.0 1676.5,127.3 1677.0,125.6 1677.5,124.9 1678.0,124.7 1678.5,126.2 1679.0,130.3 1679.5,131.7 1680.0,130.7 1680.5,132.1 1681.0,133.0 1681.5,131.2 1682.0,130.2 1682.5,130.7 1683.0,129.1 1683.5,127.1 1684.0,126.1 1684.5,125.5 1685.0,123.5 1685.5,122.2 1686.0,125.0 1686.5,129.0 1687.0,130.7 1687.5,130.2 1688.0,127.6 1688.5,124.8 1689.0,125.6 1689.5,128.6 1690.0,129.4 1690.5,133.1 1691.0,136.8 1691.5,142.7 1692.0,150.2 1692.5,157.7 1693.0,168.6 1693.5,179.1 1694.0,184.3 1694.5,186.8 1695.0,187.4 1695.5,190.0 1696.0,200.5 1696.5,204.3 1697.0,199.1 1697.5,192.0 1698.0,189.0 1698.5,190.4 1699.0,197.2 1699.5,203.3 1700.0,202.8 1700.5,196.9 1701.0,191.0 1701.5,189.6 1702.0,190.8 1702.5,192.0 1703.0,190.8 1703.5,187.5 1704.0,183.5 1704.5,178.5 1705.0,173.8 1705.5,175.0 1706.0,181.4 1706.5,185.8 1707.0,190.5 1707.5,195.4 1708.0,193.9 1708.5,191.1 1709.0,192.2 1709.5,191.6 1710.0,186.5 1710.5,180.3 1711.0,177.7 1711.5,180.4 1712.0,182.1 1712.5,181.4 1713.0,183.4 1713.5,186.3 1714.0,187.4 1714.5,186.1 1715.0,184.7 1715.5,185.9 1716.0,188.2 1716.5,186.1 1717.0,182.2 1717.5,183.1 1718.0,186.5 1718.5,186.3 1719.0,183.1 1719.5,183.7 1720.0,186.2 1720.5,184.2 1721.0,181.2 1721.5,182.3 1722.0,187.3 1722.5,192.0 1723.0,192.2 1723.5,185.7 1724.0,181.6 1724.5,185.3 1725.0,186.0 1725.5,181.2 1726.0,180.8 1726.5,184.2 1727.0,183.6 1727.5,181.3 1728.0,179.8 1728.5,179.9 1729.0,181.3 1729.5,181.3 1730.0,180.0 1730.5,181.2 1731.0,183.4 1731.5,185.6 1732.0,184.3 1732.5,179.2 1733.0,178.1 1733.5,182.1 1734.0,182.4 1734.5,178.8 1735.0,178.5 1735.5,181.1 1736.0,182.9 1736.5,182.1 1737.0,180.0 1737.5,178.9 1738.0,180.5 1738.5,185.0 1739.0,187.2 1739.5,184.8 1740.0,181.7 1740.5,178.1 1741.0,177.7 1741.5,184.5 1742.0,190.9 1742.5,188.7 1743.0,180.6 1743.5,173.3 1744.0,169.6 1744.5,170.4 1745.0,173.5 1745.5,175.3 1746.0,172.5 1746.5,169.6 1747.0,171.0 1747.5,171.9 1748.0,172.5 1748.5,175.4 1749.0,175.5 1749.5,171.3 1750.0,168.7 1750.5,168.5 1751.0,166.7 1751.5,163.0 1752.0,159.6 1752.5,159.5 1753.0,163.5 1753.5,167.2 1754.0,166.1 1754.5,161.8 1755.0,160.9 1755.5,164.7 1756.0,169.3 1756.5,171.8" fill="none" stroke="#e4e4e4" stroke-width="1.0" stroke-linejoin="round" clip-path="url(#topclip)"/>
<text x="669.7" y="5.9" font-size="13" fill="#f0f0f0" text-anchor="end" letter-spacing="0.25">20.0</text>
<text x="669.7" y="77.9" font-size="13" fill="#f0f0f0" text-anchor="end" letter-spacing="0.25">0.0</text>
<text x="669.7" y="149.9" font-size="13" fill="#f0f0f0" text-anchor="end" letter-spacing="0.25">-20.0</text>
<text x="669.7" y="221.9" font-size="13" fill="#f0f0f0" text-anchor="end" letter-spacing="0.25">-40.0</text>
<text x="669.7" y="293.9" font-size="13" fill="#f0f0f0" text-anchor="end" letter-spacing="0.25">-60.0</text>
<text x="735.2" y="306.5" font-size="13" fill="#f0f0f0" text-anchor="middle" letter-spacing="0.25">223</text>
<text x="847.2" y="306.5" font-size="13" fill="#f0f0f0" text-anchor="middle" letter-spacing="0.25">223.2</text>
<text x="959.2" y="306.5" font-size="13" fill="#f0f0f0" text-anchor="middle" letter-spacing="0.25">223.4</text>
<text x="1071.2" y="306.5" font-size="13" fill="#f0f0f0" text-anchor="middle" letter-spacing="0.25">223.6</text>
<text x="1183.2" y="306.5" font-size="13" fill="#f0f0f0" text-anchor="middle" letter-spacing="0.25">223.8</text>
<text x="1294.2" y="306.5" font-size="13" fill="#f0f0f0" text-anchor="middle" letter-spacing="0.25">224</text>
<text x="1406.2" y="306.5" font-size="13" fill="#f0f0f0" text-anchor="middle" letter-spacing="0.25">224.2</text>
<text x="1518.2" y="306.5" font-size="13" fill="#f0f0f0" text-anchor="middle" letter-spacing="0.25">224.4</text>
<text x="1630.2" y="306.5" font-size="13" fill="#f0f0f0" text-anchor="middle" letter-spacing="0.25">224.6</text>
<text x="1742.2" y="306.5" font-size="13" fill="#f0f0f0" text-anchor="middle" letter-spacing="0.25">224.8</text>
<text x="1197.1" y="330.8" font-size="16" fill="#f0f0f0" textLength="123.5" lengthAdjust="spacingAndGlyphs">Frequency (MHz)</text>
<text transform="translate(610.8,163.5) rotate(-90)" font-size="16" fill="#f0f0f0" textLength="110" lengthAdjust="spacingAndGlyphs">Magnitude (dB)</text>
<rect x="0" y="353" width="1754" height="5" fill="#7c7c7c"/>
<rect x="0" y="358" width="1754" height="39" fill="#2e2c2b"/>
<rect x="0" y="396.5" width="1754" height="1.5" fill="#c6d4e2"/>
<text x="5.8" y="385.9" font-size="16.2" fill="#f0f0f0" textLength="39.5" lengthAdjust="spacingAndGlyphs" font-style="italic">DAB+</text>
<rect x="62" y="368.5" width="59" height="21" rx="2" fill="none" stroke="#8c8c8c" stroke-width="1"/>
<text x="64.7" y="382.7" font-size="11.8" fill="#f0f0f0" textLength="21.3" lengthAdjust="spacingAndGlyphs">12A</text>
<path d="M99.6,376.2 L110,376.2 L104.8,381.2 Z" fill="#f4f4f4"/>
<rect x="131" y="358" width="2" height="39" fill="#9a9a9a"/>
<text x="148" y="384.4" font-size="15.3" fill="#ececec" textLength="37.6" lengthAdjust="spacingAndGlyphs">EId: 0</text>
<text x="226.6" y="384.2" font-size="15.2" fill="#ececec" textLength="78.9" lengthAdjust="spacingAndGlyphs">0001-01-01</text>
<text x="316.9" y="384.2" font-size="15.2" fill="#ececec" textLength="71" lengthAdjust="spacingAndGlyphs">00:00:00 Z</text>
<rect x="532" y="358" width="2.5" height="39" fill="#e8e8e8"/>
<rect x="545" y="368.5" width="24.5" height="21" rx="2" fill="none" stroke="#8c8c8c" stroke-width="1"/>
<path d="M551.5,376 L562.5,376 L557,381.5 Z" fill="#f4f4f4"/>
<circle cx="604.6" cy="378.8" r="11.3" fill="#1a5986"/>
<circle cx="604.6" cy="378.8" r="5.2" fill="#ff1010"/>
<circle cx="639.5" cy="378.8" r="11.3" fill="#1c3d5c"/>
<rect x="634.5" y="373.3" width="10" height="11" fill="#0a1a2a"/>
<rect x="0" y="398" width="1754" height="375" fill="#1a5986"/>
<rect x="0" y="398" width="1754" height="34" fill="#0d2b4e"/>
<rect x="190" y="398" width="5" height="375" fill="#e6ecf2"/>
<rect x="376" y="398" width="3" height="375" fill="#d6e0ea"/>
<rect x="771" y="398" width="5" height="375" fill="#e6ecf2"/>
<text x="1.3" y="420.9" font-size="19.1" fill="#f0f020" textLength="92.5" lengthAdjust="spacingAndGlyphs">No Service</text>
<text x="200.5" y="421" font-size="19.1" fill="#ffffff" textLength="129.3" lengthAdjust="spacingAndGlyphs">Service Quality</text>
<text x="205.2" y="461" font-size="14.6" fill="#f4f4f4" textLength="54.3" lengthAdjust="spacingAndGlyphs">SNR (dB)</text>
<rect x="325" y="442.4" width="40" height="24.6" fill="#808080"/>
<text x="345" y="459.59999999999997" font-size="12.5" fill="#f4f4f4" text-anchor="middle">0</text>
<text x="205.2" y="492.1" font-size="14.6" fill="#f4f4f4" textLength="61.3" lengthAdjust="spacingAndGlyphs">FIC (ok %)</text>
<rect x="325" y="473.2" width="40" height="24.6" fill="#808080"/>
<text x="345" y="490.4" font-size="12.5" fill="#f4f4f4" text-anchor="middle">0</text>
<text x="205.2" y="523.1" font-size="14.6" fill="#f4f4f4" textLength="57.9" lengthAdjust="spacingAndGlyphs">RS (ok %)</text>
<rect x="325" y="504.0" width="40" height="24.6" fill="#808080"/>
<text x="205.2" y="552.9" font-size="14.6" fill="#f4f4f4" textLength="74.2" lengthAdjust="spacingAndGlyphs">Null Symbol</text>
<rect x="325" y="534.8" width="40" height="24.6" fill="#808080"/>
<text x="205.2" y="584" font-size="14.6" fill="#f4f4f4" textLength="105.8" lengthAdjust="spacingAndGlyphs">SymbolTime (ms)</text>
<rect x="325" y="565.6" width="40" height="24.6" fill="#808080"/>
<text x="345" y="582.8000000000001" font-size="12.5" fill="#f4f4f4" text-anchor="middle">0</text>
<text x="205.2" y="614.2" font-size="14.6" fill="#f4f4f4" textLength="98.3" lengthAdjust="spacingAndGlyphs">FrameTime (ms)</text>
<rect x="325" y="596.4" width="40" height="24.6" fill="#808080"/>
<text x="345" y="613.6" font-size="12.5" fill="#f4f4f4" text-anchor="middle">0</text>
<path d="M387,432 L387,406.8 Q387,405.3 388.5,405.3 L437,405.3 Q448,405.3 448,416.3 L448,432 Z" fill="#8a8a8a"/>
<path d="M490,432 L490,406.8 Q490,405.3 491.5,405.3 L551,405.3 Q562,405.3 562,416.3 L562,432 Z" fill="#8a8a8a"/>
<path d="M562,432 L562,406.8 Q562,405.3 563.5,405.3 L609,405.3 Q620,405.3 620,416.3 L620,432 Z" fill="#8a8a8a"/>
<path d="M620,432 L620,406.8 Q620,405.3 621.5,405.3 L694.7,405.3 Q705.7,405.3 705.7,416.3 L705.7,432 Z" fill="#8a8a8a"/>
<path d="M447.5,432.5 L447.5,406.8 Q447.5,405.3 449.0,405.3 L479.5,405.3 Q490.5,405.3 490.5,416.3 L490.5,432.5 Z" fill="#1a5986" stroke="#4a7fae" stroke-width="1"/>
<rect x="448.2" y="431" width="41.6" height="3" fill="#1a5986"/>
<text x="400.5" y="425.8" font-size="16.9" fill="#dcdcdc" textLength="34.2" lengthAdjust="spacingAndGlyphs">Sync</text>
<text x="460.5" y="425.8" font-size="16.9" fill="#ffffff" textLength="17.1" lengthAdjust="spacingAndGlyphs">TII</text>
<text x="504.5" y="425.8" font-size="16.9" fill="#dcdcdc" textLength="43.8" lengthAdjust="spacingAndGlyphs">Audio</text>
<text x="575.2" y="425.8" font-size="16.9" fill="#dcdcdc" textLength="32" lengthAdjust="spacingAndGlyphs">AAC</text>
<text x="633.1" y="425.8" font-size="16.9" fill="#dcdcdc" textLength="58.9" lengthAdjust="spacingAndGlyphs">Options</text>
<circle cx="418.3" cy="447" r="4.6" fill="#ff1010"/>
<rect x="443.4" y="442" width="8.6" height="10" fill="#0e2a48"/>
<rect x="394.4" y="461" width="247.4" height="2" fill="#5f8db5"/>
<rect x="651.3" y="432" width="1" height="32" fill="#3f78a8"/>
<text x="657.3" y="463.4" font-size="14.3" fill="#f4f4f4" textLength="60.2" lengthAdjust="spacingAndGlyphs">Threshold</text>
<text x="394.4" y="493.5" font-size="14.3" fill="#f4f4f4" textLength="46.700000000000045" lengthAdjust="spacingAndGlyphs">Pattern</text>
<text x="461.7" y="493.5" font-size="14.3" fill="#f4f4f4" textLength="45.10000000000002" lengthAdjust="spacingAndGlyphs">MainId</text>
<text x="527.3" y="493.5" font-size="14.3" fill="#f4f4f4" textLength="37.40000000000009" lengthAdjust="spacingAndGlyphs">SubId</text>
<text x="585.9" y="493.5" font-size="14.3" fill="#f4f4f4" textLength="55.5" lengthAdjust="spacingAndGlyphs">Strength</text>
<rect x="394.4" y="497.5" width="247.4" height="2" fill="#5f8db5"/>
<line x1="685" y1="481" x2="685" y2="602" stroke="#e8e8e8" stroke-width="2.5"/>
<circle cx="685" cy="586.5" r="6.3" fill="url(#thumbg)" stroke="#5a5a5a" stroke-width="0.5"/>
<text x="683.6" y="622.3" font-size="13.7" fill="#f4f4f4" text-anchor="middle" textLength="25.2" lengthAdjust="spacingAndGlyphs">0.10</text>
<rect x="776" y="418" width="978" height="355" fill="#000000"/>
<text x="1239.8" y="412.7" font-size="14.7" fill="#f4f4f4" textLength="211.8" lengthAdjust="spacingAndGlyphs">Channel Impulse Response (CIR)</text>
<circle cx="792.4" cy="436.2" r="6.5" fill="#e4e4e4"/>
<text x="803.5" y="440.9" font-size="11.9" fill="#f0f0f0" textLength="33.3" lengthAdjust="spacingAndGlyphs">Freeze</text>
<circle cx="864" cy="436.2" r="6.5" fill="#e4e4e4"/>
<text x="874.6" y="440.9" font-size="11.9" fill="#f0f0f0" textLength="44.9" lengthAdjust="spacingAndGlyphs">Gradient</text>
<text x="791.4" y="481.9" font-size="11.9" fill="#f0f0f0" textLength="87.9" lengthAdjust="spacingAndGlyphs">Smoothing Level</text>
<line x1="792.8" y1="489.8" x2="792.8" y2="494" stroke="#c0c0c0" stroke-width="1"/>
<line x1="805.9399999999999" y1="489.8" x2="805.9399999999999" y2="494" stroke="#c0c0c0" stroke-width="1"/>
<line x1="819.0799999999999" y1="489.8" x2="819.0799999999999" y2="494" stroke="#c0c0c0" stroke-width="1"/>
<line x1="832.22" y1="489.8" x2="832.22" y2="494" stroke="#c0c0c0" stroke-width="1"/>
<line x1="845.36" y1="489.8" x2="845.36" y2="494" stroke="#c0c0c0" stroke-width="1"/>
<line x1="858.5" y1="489.8" x2="858.5" y2="494" stroke="#c0c0c0" stroke-width="1"/>
<line x1="871.64" y1="489.8" x2="871.64" y2="494" stroke="#c0c0c0" stroke-width="1"/>
<line x1="884.78" y1="489.8" x2="884.78" y2="494" stroke="#c0c0c0" stroke-width="1"/>
<line x1="897.9200000000001" y1="489.8" x2="897.9200000000001" y2="494" stroke="#c0c0c0" stroke-width="1"/>
<line x1="911.0600000000001" y1="489.8" x2="911.0600000000001" y2="494" stroke="#c0c0c0" stroke-width="1"/>
<line x1="924.2" y1="489.8" x2="924.2" y2="494" stroke="#c0c0c0" stroke-width="1"/>
<line x1="787" y1="500.3" x2="930.6" y2="500.3" stroke="#dcdcdc" stroke-width="3" stroke-linecap="round"/><circle cx="845.4" cy="500.3" r="6.3" fill="url(#thumbg)" stroke="#5a5a5a" stroke-width="0.5"/>
<text x="791.4" y="535.9" font-size="11.9" fill="#f0f0f0" textLength="41" lengthAdjust="spacingAndGlyphs">Zoom X</text>
<line x1="787" y1="550.5" x2="930.6" y2="550.5" stroke="#dcdcdc" stroke-width="3" stroke-linecap="round"/><circle cx="792.4" cy="550.5" r="6.3" fill="url(#thumbg)" stroke="#5a5a5a" stroke-width="0.5"/>
<text x="791.5" y="585.3" font-size="11.9" fill="#f0f0f0" textLength="40.5" lengthAdjust="spacingAndGlyphs">Zoom Y</text>
<line x1="787" y1="600.8" x2="930.6" y2="600.8" stroke="#dcdcdc" stroke-width="3" stroke-linecap="round"/><circle cx="792.6" cy="600.8" r="6.3" fill="url(#thumbg)" stroke="#5a5a5a" stroke-width="0.5"/>
<text x="791.5" y="635.2" font-size="11.9" fill="#f0f0f0" textLength="30.8" lengthAdjust="spacingAndGlyphs">x-Axis</text>
<circle cx="803" cy="650.9" r="5.6" fill="#f4f4f4"/>
<text x="815.5" y="655" font-size="11.9" fill="#f0f0f0" textLength="43.5" lengthAdjust="spacingAndGlyphs">Samples</text>
<circle cx="803" cy="671" r="5.6" fill="#f4f4f4"/>
<text x="815.5" y="675.2" font-size="11.9" fill="#f0f0f0" textLength="44.5" lengthAdjust="spacingAndGlyphs">Distance</text>
<circle cx="803" cy="690.9" r="5.6" fill="#f4f4f4"/>
<text x="815.5" y="695" font-size="11.9" fill="#f0f0f0" textLength="25" lengthAdjust="spacingAndGlyphs">Time</text>
<circle cx="803" cy="671" r="2.6" fill="#202020"/>
<rect x="1055" y="439.5" width="197" height="334" fill="#3e3e3e"/>
<line x1="1092.5" y1="440" x2="1092.5" y2="773" stroke="#5e5e5e" stroke-width="1"/><line x1="1145.5" y1="440" x2="1145.5" y2="773" stroke="#5e5e5e" stroke-width="1"/><line x1="1199.5" y1="440" x2="1199.5" y2="773" stroke="#5e5e5e" stroke-width="1"/><line x1="1252.5" y1="440" x2="1252.5" y2="773" stroke="#464646" stroke-width="1"/><line x1="1306.5" y1="440" x2="1306.5" y2="773" stroke="#464646" stroke-width="1"/><line x1="1359.5" y1="440" x2="1359.5" y2="773" stroke="#464646" stroke-width="1"/><line x1="1413.5" y1="440" x2="1413.5" y2="773" stroke="#464646" stroke-width="1"/><line x1="1466.5" y1="440" x2="1466.5" y2="773" stroke="#464646" stroke-width="1"/><line x1="1520.5" y1="440" x2="1520.5" y2="773" stroke="#464646" stroke-width="1"/><line x1="1573.5" y1="440" x2="1573.5" y2="773" stroke="#464646" stroke-width="1"/><line x1="1627.5" y1="440" x2="1627.5" y2="773" stroke="#464646" stroke-width="1"/><line x1="1680.5" y1="440" x2="1680.5" y2="773" stroke="#464646" stroke-width="1"/><line x1="1734.5" y1="440" x2="1734.5" y2="773" stroke="#464646" stroke-width="1"/><line x1="1055" y1="509.5" x2="1252" y2="509.5" stroke="#5e5e5e" stroke-width="1"/><line x1="1252" y1="509.5" x2="1754" y2="509.5" stroke="#464646" stroke-width="1"/><line x1="1055" y1="579.5" x2="1252" y2="579.5" stroke="#5e5e5e" stroke-width="1"/><line x1="1252" y1="579.5" x2="1754" y2="579.5" stroke="#464646" stroke-width="1"/><line x1="1055" y1="648.5" x2="1252" y2="648.5" stroke="#5e5e5e" stroke-width="1"/><line x1="1252" y1="648.5" x2="1754" y2="648.5" stroke="#464646" stroke-width="1"/><line x1="1055" y1="718.5" x2="1252" y2="718.5" stroke="#5e5e5e" stroke-width="1"/><line x1="1252" y1="718.5" x2="1754" y2="718.5" stroke="#464646" stroke-width="1"/><line x1="1055" y1="439.5" x2="1754" y2="439.5" stroke="#7a7a7a" stroke-width="1"/>
<line x1="1252.5" y1="440" x2="1252.5" y2="773" stroke="#8a8a60" stroke-width="1"/>
<polyline points="1056.0,674.8 1056.5,670.7 1057.0,660.9 1057.5,653.1 1058.0,647.5 1058.5,648.8 1059.0,662.0 1059.5,677.1 1060.0,680.3 1060.5,676.3 1061.0,674.8 1061.5,676.8 1062.0,679.1 1062.5,676.4 1063.0,665.4 1063.5,650.0 1064.0,639.8 1064.5,639.5 1065.0,648.4 1065.5,658.8 1066.0,661.7 1066.5,659.1 1067.0,660.3 1067.5,671.1 1068.0,689.2 1068.5,702.8 1069.0,706.0 1069.5,703.0 1070.0,691.9 1070.5,677.7 1071.0,663.9 1071.5,654.7 1072.0,655.6 1072.5,663.1 1073.0,671.2 1073.5,677.8 1074.0,677.2 1074.5,667.3 1075.0,657.9 1075.5,656.6 1076.0,658.8 1076.5,657.1 1077.0,653.8 1077.5,655.5 1078.0,659.3 1078.5,660.3 1079.0,662.3 1079.5,662.9 1080.0,655.1 1080.5,646.4 1081.0,646.4 1081.5,652.7 1082.0,658.0 1082.5,657.3 1083.0,653.8 1083.5,655.5 1084.0,663.0 1084.5,672.4 1085.0,674.6 1085.5,662.6 1086.0,651.9 1086.5,655.4 1087.0,661.6 1087.5,667.4 1088.0,679.4 1088.5,687.9 1089.0,690.0 1089.5,687.1 1090.0,679.7 1090.5,673.6 1091.0,666.0 1091.5,656.0 1092.0,650.8 1092.5,654.5 1093.0,661.9 1093.5,665.8 1094.0,664.0 1094.5,664.4 1095.0,668.2 1095.5,662.3 1096.0,651.8 1096.5,651.5 1097.0,655.9 1097.5,657.1 1098.0,659.1 1098.5,664.8 1099.0,670.2 1099.5,666.8 1100.0,653.0 1100.5,642.6 1101.0,645.4 1101.5,650.3 1102.0,642.6 1102.5,633.7 1103.0,639.1 1103.5,649.5 1104.0,653.8 1104.5,654.3 1105.0,651.3 1105.5,645.1 1106.0,644.8 1106.5,653.6 1107.0,658.0 1107.5,652.6 1108.0,650.5 1108.5,658.3 1109.0,667.7 1109.5,673.9 1110.0,681.1 1110.5,685.8 1111.0,681.5 1111.5,677.5 1112.0,681.3 1112.5,681.9 1113.0,668.8 1113.5,648.8 1114.0,636.1 1114.5,635.3 1115.0,640.7 1115.5,648.5 1116.0,658.9 1116.5,663.3 1117.0,657.6 1117.5,652.0 1118.0,653.5 1118.5,658.6 1119.0,664.1 1119.5,672.4 1120.0,679.9 1120.5,678.4 1121.0,669.1 1121.5,657.6 1122.0,647.1 1122.5,643.2 1123.0,646.3 1123.5,649.1 1124.0,648.1 1124.5,647.3 1125.0,650.5 1125.5,659.7 1126.0,667.5 1126.5,664.5 1127.0,658.7 1127.5,662.1 1128.0,673.2 1128.5,683.9 1129.0,683.4 1129.5,670.1 1130.0,658.5 1130.5,653.7 1131.0,651.4 1131.5,655.3 1132.0,663.5 1132.5,664.3 1133.0,660.8 1133.5,662.3 1134.0,663.5 1134.5,662.8 1135.0,664.4 1135.5,663.7 1136.0,659.8 1136.5,660.0 1137.0,665.0 1137.5,667.9 1138.0,665.8 1138.5,664.7 1139.0,666.6 1139.5,666.2 1140.0,663.9 1140.5,662.0 1141.0,657.9 1141.5,653.1 1142.0,649.8 1142.5,648.3 1143.0,649.0 1143.5,649.5 1144.0,651.0 1144.5,657.5 1145.0,668.2 1145.5,677.5 1146.0,674.2 1146.5,658.7 1147.0,649.6 1147.5,653.0 1148.0,656.0 1148.5,657.1 1149.0,665.4 1149.5,674.0 1150.0,671.6 1150.5,662.3 1151.0,653.9 1151.5,651.9 1152.0,656.4 1152.5,661.0 1153.0,664.8 1153.5,667.9 1154.0,663.8 1154.5,654.8 1155.0,650.7 1155.5,656.5 1156.0,672.0 1156.5,684.4 1157.0,679.8 1157.5,666.1 1158.0,658.7 1158.5,663.0 1159.0,674.4 1159.5,677.9 1160.0,666.7 1160.5,657.1 1161.0,659.8 1161.5,666.5 1162.0,666.8 1162.5,658.0 1163.0,649.6 1163.5,650.5 1164.0,657.4 1164.5,664.0 1165.0,668.0 1165.5,665.4 1166.0,656.1 1166.5,650.0 1167.0,652.1 1167.5,658.9 1168.0,669.4 1168.5,681.4 1169.0,685.9 1169.5,682.9 1170.0,682.4 1170.5,683.7 1171.0,681.1 1171.5,676.5 1172.0,671.2 1172.5,665.7 1173.0,660.0 1173.5,656.8 1174.0,662.7 1174.5,670.1 1175.0,663.8 1175.5,652.4 1176.0,653.0 1176.5,662.9 1177.0,670.5 1177.5,670.9 1178.0,667.0 1178.5,664.9 1179.0,666.1 1179.5,668.4 1180.0,672.2 1180.5,676.5 1181.0,678.9 1181.5,676.8 1182.0,667.6 1182.5,658.8 1183.0,659.4 1183.5,665.0 1184.0,668.0 1184.5,668.9 1185.0,670.8 1185.5,671.1 1186.0,662.6 1186.5,648.3 1187.0,641.5 1187.5,644.1 1188.0,646.0 1188.5,644.9 1189.0,648.3 1189.5,658.7 1190.0,665.1 1190.5,657.8 1191.0,644.4 1191.5,638.2 1192.0,644.2 1192.5,654.7 1193.0,657.4 1193.5,654.7 1194.0,656.2 1194.5,661.0 1195.0,662.5 1195.5,656.6 1196.0,647.6 1196.5,646.7 1197.0,657.9 1197.5,673.7 1198.0,683.6 1198.5,685.0 1199.0,687.4 1199.5,695.5 1200.0,700.0 1200.5,696.2 1201.0,686.4 1201.5,673.8 1202.0,664.9 1202.5,655.9 1203.0,644.9 1203.5,641.3 1204.0,645.9 1204.5,650.3 1205.0,651.8 1205.5,654.5 1206.0,655.8 1206.5,653.9 1207.0,655.0 1207.5,657.8 1208.0,658.3 1208.5,661.6 1209.0,665.1 1209.5,660.2 1210.0,654.0 1210.5,655.7 1211.0,659.8 1211.5,660.9 1212.0,662.9 1212.5,665.9 1213.0,663.0 1213.5,655.5 1214.0,654.9 1214.5,664.1 1215.0,670.6 1215.5,667.7 1216.0,660.8 1216.5,651.9 1217.0,645.0 1217.5,648.8 1218.0,660.5 1218.5,667.8 1219.0,665.6 1219.5,659.5 1220.0,653.6 1220.5,648.2 1221.0,646.7 1221.5,651.1 1222.0,656.9 1222.5,662.0 1223.0,664.9 1223.5,662.9 1224.0,661.9 1224.5,665.1 1225.0,664.1 1225.5,661.8 1226.0,671.6 1226.5,689.6 1227.0,703.4 1227.5,711.5 1228.0,715.0 1228.5,710.3 1229.0,698.6 1229.5,687.3 1230.0,680.2 1230.5,672.2 1231.0,658.3 1231.5,644.8 1232.0,642.7 1232.5,655.3 1233.0,669.5 1233.5,669.6 1234.0,659.5 1234.5,652.2 1235.0,653.0 1235.5,657.6 1236.0,658.8 1236.5,658.5 1237.0,657.7 1237.5,653.0 1238.0,651.1 1238.5,659.2 1239.0,668.3 1239.5,672.8 1240.0,676.6 1240.5,673.3 1241.0,662.7 1241.5,659.9 1242.0,668.1 1242.5,669.7 1243.0,655.6 1243.5,640.8 1244.0,640.3 1244.5,651.9 1245.0,660.1 1245.5,657.0 1246.0,651.4 1246.5,647.5 1247.0,647.1 1247.5,654.7 1248.0,659.7 1248.5,654.9 1249.0,653.4 1249.5,640.0 1250.0,623.8 1250.5,607.7 1251.0,591.5 1251.5,575.3 1252.0,559.2 1252.5,543.0 1253.0,561.0 1253.5,574.3 1254.0,586.3 1254.5,597.6 1255.0,608.2 1255.5,618.5 1256.0,628.4 1256.5,638.0 1257.0,640.0 1257.5,642.0 1258.0,644.0 1258.5,646.0 1259.0,648.0 1259.5,658.1 1260.0,652.0 1260.5,654.0 1261.0,656.0 1261.5,658.1 1262.0,664.4 1262.5,668.3 1263.0,667.2 1263.5,661.9 1264.0,662.3 1264.5,671.1 1265.0,673.3 1265.5,664.6 1266.0,660.2 1266.5,662.7 1267.0,662.8 1267.5,665.5 1268.0,673.9 1268.5,674.8 1269.0,667.6 1269.5,665.8 1270.0,668.7 1270.5,666.4 1271.0,660.0 1271.5,659.8 1272.0,667.9 1272.5,674.6 1273.0,674.8 1273.5,672.5 1274.0,671.4 1274.5,672.3 1275.0,672.9 1275.5,674.6 1276.0,681.3 1276.5,690.1 1277.0,698.1 1277.5,704.3 1278.0,700.4 1278.5,684.1 1279.0,667.5 1279.5,661.1 1280.0,662.9 1280.5,661.8 1281.0,655.5 1281.5,655.3 1282.0,666.8 1282.5,675.4 1283.0,665.2 1283.5,647.3 1284.0,640.8 1284.5,648.1 1285.0,661.0 1285.5,672.1 1286.0,673.6 1286.5,664.0 1287.0,656.7 1287.5,662.8 1288.0,676.4 1288.5,684.3 1289.0,681.2 1289.5,676.2 1290.0,679.4 1290.5,680.3 1291.0,667.6 1291.5,658.3 1292.0,662.9 1292.5,666.5 1293.0,661.8 1293.5,660.5 1294.0,665.7 1294.5,667.9 1295.0,665.5 1295.5,660.1 1296.0,651.7 1296.5,646.8 1297.0,649.9 1297.5,654.5 1298.0,654.2 1298.5,650.5 1299.0,647.2 1299.5,650.6 1300.0,663.0 1300.5,672.6 1301.0,673.5 1301.5,672.7 1302.0,672.4 1302.5,674.7 1303.0,679.8 1303.5,677.7 1304.0,667.3 1304.5,658.0 1305.0,655.2 1305.5,660.5 1306.0,669.3 1306.5,676.0 1307.0,677.9 1307.5,672.2 1308.0,664.2 1308.5,659.5 1309.0,653.6 1309.5,648.9 1310.0,652.3 1310.5,659.0 1311.0,661.8 1311.5,661.3 1312.0,659.4 1312.5,657.6 1313.0,659.8 1313.5,669.1 1314.0,680.0 1314.5,680.6 1315.0,668.6 1315.5,658.0 1316.0,657.9 1316.5,662.7 1317.0,665.5 1317.5,665.6 1318.0,667.2 1318.5,672.1 1319.0,674.0 1319.5,672.1 1320.0,673.4 1320.5,674.4 1321.0,671.2 1321.5,666.9 1322.0,661.7 1322.5,657.8 1323.0,656.0 1323.5,654.7 1324.0,655.6 1324.5,655.6 1325.0,652.2 1325.5,650.6 1326.0,653.8 1326.5,660.6 1327.0,669.7 1327.5,675.9 1328.0,674.3 1328.5,670.6 1329.0,668.9 1329.5,666.9 1330.0,670.7 1330.5,680.9 1331.0,687.7 1331.5,691.2 1332.0,691.7 1332.5,681.5 1333.0,668.3 1333.5,664.1 1334.0,663.1 1334.5,657.5 1335.0,651.8 1335.5,651.7 1336.0,655.3 1336.5,655.9 1337.0,650.3 1337.5,643.0 1338.0,641.1 1338.5,644.3 1339.0,648.5 1339.5,652.5 1340.0,652.2 1340.5,647.9 1341.0,649.3 1341.5,653.0 1342.0,648.7 1342.5,640.5 1343.0,634.8 1343.5,635.2 1344.0,644.9 1344.5,655.3 1345.0,659.9 1345.5,664.4 1346.0,668.0 1346.5,666.2 1347.0,663.3 1347.5,659.3 1348.0,649.9 1348.5,643.2 1349.0,649.9 1349.5,664.5 1350.0,674.1 1350.5,674.5 1351.0,672.1 1351.5,674.0 1352.0,679.7 1352.5,679.6 1353.0,669.4 1353.5,660.8 1354.0,663.0 1354.5,669.5 1355.0,672.7 1355.5,671.7 1356.0,667.5 1356.5,661.9 1357.0,656.1 1357.5,651.7 1358.0,651.3 1358.5,653.9 1359.0,654.7 1359.5,653.3 1360.0,653.2 1360.5,653.6 1361.0,652.7 1361.5,654.7 1362.0,662.0 1362.5,664.9 1363.0,658.0 1363.5,651.8 1364.0,649.9 1364.5,649.6 1365.0,656.6 1365.5,667.0 1366.0,666.5 1366.5,660.0 1367.0,661.6 1367.5,667.3 1368.0,666.6 1368.5,662.7 1369.0,660.3 1369.5,657.8 1370.0,655.8 1370.5,655.5 1371.0,654.5 1371.5,652.5 1372.0,651.1 1372.5,649.4 1373.0,645.4 1373.5,642.0 1374.0,644.2 1374.5,651.1 1375.0,652.8 1375.5,646.3 1376.0,647.0 1376.5,656.9 1377.0,660.5 1377.5,656.9 1378.0,655.6 1378.5,657.9 1379.0,660.9 1379.5,662.5 1380.0,664.4 1380.5,668.7 1381.0,673.8 1381.5,678.4 1382.0,680.3 1382.5,676.7 1383.0,667.8 1383.5,657.8 1384.0,652.8 1384.5,654.0 1385.0,655.7 1385.5,653.3 1386.0,653.2 1386.5,662.7 1387.0,671.0 1387.5,664.9 1388.0,655.9 1388.5,654.3 1389.0,656.4 1389.5,660.8 1390.0,663.7 1390.5,659.4 1391.0,653.7 1391.5,651.2 1392.0,646.9 1392.5,639.0 1393.0,634.8 1393.5,641.1 1394.0,654.3 1394.5,662.8 1395.0,664.3 1395.5,662.8 1396.0,655.8 1396.5,651.2 1397.0,655.6 1397.5,658.6 1398.0,661.0 1398.5,674.1 1399.0,681.9 1399.5,667.6 1400.0,651.9 1400.5,649.9 1401.0,652.9 1401.5,653.3 1402.0,649.3 1402.5,645.9 1403.0,649.5 1403.5,655.3 1404.0,656.0 1404.5,656.5 1405.0,661.9 1405.5,664.3 1406.0,657.8 1406.5,649.7 1407.0,645.2 1407.5,644.3 1408.0,644.7 1408.5,643.2 1409.0,642.0 1409.5,646.6 1410.0,655.1 1410.5,660.5 1411.0,661.8 1411.5,661.4 1412.0,661.3 1412.5,662.8 1413.0,666.0 1413.5,668.7 1414.0,664.6 1414.5,657.5 1415.0,657.4 1415.5,658.7 1416.0,659.4 1416.5,666.2 1417.0,671.4 1417.5,670.6 1418.0,673.5 1418.5,676.4 1419.0,673.3 1419.5,670.9 1420.0,672.5 1420.5,677.4 1421.0,682.5 1421.5,678.0 1422.0,664.5 1422.5,659.5 1423.0,666.7 1423.5,671.0 1424.0,667.6 1424.5,660.3 1425.0,650.4 1425.5,644.9 1426.0,649.7 1426.5,660.0 1427.0,667.6 1427.5,668.8 1428.0,664.8 1428.5,657.4 1429.0,650.6 1429.5,650.2 1430.0,656.0 1430.5,659.8 1431.0,657.8 1431.5,655.9 1432.0,657.7 1432.5,655.5 1433.0,645.5 1433.5,642.3 1434.0,655.4 1434.5,674.5 1435.0,681.4 1435.5,667.9 1436.0,647.4 1436.5,636.3 1437.0,634.6 1437.5,636.8 1438.0,643.5 1438.5,653.1 1439.0,659.8 1439.5,664.0 1440.0,667.8 1440.5,666.0 1441.0,658.0 1441.5,654.8 1442.0,662.2 1442.5,670.9 1443.0,673.8 1443.5,674.7 1444.0,675.1 1444.5,671.5 1445.0,663.8 1445.5,661.0 1446.0,668.3 1446.5,673.2 1447.0,670.6 1447.5,671.8 1448.0,678.0 1448.5,681.0 1449.0,678.8 1449.5,673.5 1450.0,667.4 1450.5,662.8 1451.0,660.8 1451.5,657.8 1452.0,655.2 1452.5,657.5 1453.0,660.6 1453.5,662.7 1454.0,665.6 1454.5,665.5 1455.0,664.8 1455.5,670.0 1456.0,677.0 1456.5,681.5 1457.0,684.4 1457.5,682.6 1458.0,675.0 1458.5,669.2 1459.0,671.8 1459.5,678.7 1460.0,675.8 1460.5,660.8 1461.0,651.2 1461.5,654.9 1462.0,660.6 1462.5,658.9 1463.0,653.5 1463.5,653.0 1464.0,660.0 1464.5,666.4 1465.0,667.5 1465.5,670.0 1466.0,671.7 1466.5,668.3 1467.0,665.2 1467.5,662.0 1468.0,654.7 1468.5,650.7 1469.0,659.7 1469.5,672.2 1470.0,673.3 1470.5,667.4 1471.0,663.6 1471.5,659.4 1472.0,651.1 1472.5,644.7 1473.0,647.1 1473.5,654.4 1474.0,660.9 1474.5,667.2 1475.0,670.5 1475.5,668.0 1476.0,663.4 1476.5,660.0 1477.0,659.7 1477.5,664.2 1478.0,665.3 1478.5,653.8 1479.0,641.2 1479.5,644.7 1480.0,657.4 1480.5,658.9 1481.0,652.2 1481.5,651.8 1482.0,658.2 1482.5,666.5 1483.0,668.9 1483.5,660.8 1484.0,650.1 1484.5,644.3 1485.0,644.7 1485.5,647.4 1486.0,650.2 1486.5,656.3 1487.0,661.6 1487.5,660.8 1488.0,659.0 1488.5,659.4 1489.0,658.5 1489.5,658.6 1490.0,664.8 1490.5,670.5 1491.0,670.5 1491.5,672.2 1492.0,674.7 1492.5,667.7 1493.0,653.5 1493.5,647.0 1494.0,654.3 1494.5,662.6 1495.0,664.8 1495.5,667.2 1496.0,672.2 1496.5,675.4 1497.0,675.2 1497.5,672.9 1498.0,669.5 1498.5,667.2 1499.0,666.1 1499.5,662.5 1500.0,657.6 1500.5,654.2 1501.0,651.7 1501.5,651.4 1502.0,650.4 1502.5,645.8 1503.0,640.8 1503.5,637.7 1504.0,640.8 1504.5,650.2 1505.0,656.8 1505.5,658.0 1506.0,659.1 1506.5,661.7 1507.0,664.7 1507.5,666.1 1508.0,664.1 1508.5,659.8 1509.0,656.0 1509.5,654.9 1510.0,657.2 1510.5,661.3 1511.0,664.1 1511.5,667.2 1512.0,670.9 1512.5,666.8 1513.0,659.2 1513.5,655.7 1514.0,650.3 1514.5,646.1 1515.0,653.3 1515.5,661.7 1516.0,658.5 1516.5,651.7 1517.0,647.9 1517.5,646.9 1518.0,654.2 1518.5,667.2 1519.0,672.5 1519.5,668.6 1520.0,666.1 1520.5,666.3 1521.0,665.9 1521.5,666.8 1522.0,667.3 1522.5,663.9 1523.0,659.9 1523.5,658.4 1524.0,655.2 1524.5,650.6 1525.0,649.4 1525.5,652.0 1526.0,658.5 1526.5,668.2 1527.0,672.8 1527.5,671.1 1528.0,676.3 1528.5,686.8 1529.0,683.6 1529.5,668.9 1530.0,659.3 1530.5,655.3 1531.0,655.3 1531.5,662.8 1532.0,670.2 1532.5,668.0 1533.0,661.0 1533.5,657.2 1534.0,659.3 1534.5,661.4 1535.0,656.3 1535.5,649.6 1536.0,650.2 1536.5,658.8 1537.0,668.8 1537.5,672.3 1538.0,665.5 1538.5,654.8 1539.0,651.0 1539.5,657.0 1540.0,667.4 1540.5,673.3 1541.0,668.9 1541.5,659.8 1542.0,655.9 1542.5,660.8 1543.0,670.1 1543.5,673.6 1544.0,668.4 1544.5,665.4 1545.0,670.6 1545.5,674.4 1546.0,672.2 1546.5,673.1 1547.0,682.8 1547.5,694.9 1548.0,700.0 1548.5,695.4 1549.0,685.6 1549.5,680.5 1550.0,679.9 1550.5,670.7 1551.0,660.8 1551.5,658.9 1552.0,657.1 1552.5,656.4 1553.0,666.6 1553.5,676.8 1554.0,669.1 1554.5,657.3 1555.0,656.4 1555.5,656.6 1556.0,655.2 1556.5,661.3 1557.0,670.5 1557.5,671.2 1558.0,665.4 1558.5,660.5 1559.0,661.3 1559.5,665.9 1560.0,667.3 1560.5,667.6 1561.0,668.6 1561.5,664.3 1562.0,659.4 1562.5,661.1 1563.0,665.0 1563.5,666.4 1564.0,665.8 1564.5,662.0 1565.0,654.6 1565.5,648.7 1566.0,651.6 1566.5,661.0 1567.0,663.3 1567.5,659.3 1568.0,661.2 1568.5,665.0 1569.0,663.8 1569.5,660.2 1570.0,654.4 1570.5,650.6 1571.0,653.5 1571.5,658.4 1572.0,661.0 1572.5,662.4 1573.0,664.8 1573.5,669.7 1574.0,674.9 1574.5,674.4 1575.0,669.8 1575.5,671.9 1576.0,681.9 1576.5,685.1 1577.0,675.6 1577.5,665.3 1578.0,657.9 1578.5,650.6 1579.0,650.6 1579.5,658.8 1580.0,664.3 1580.5,664.7 1581.0,661.0 1581.5,651.8 1582.0,648.3 1582.5,657.8 1583.0,667.4 1583.5,667.8 1584.0,664.5 1584.5,665.2 1585.0,672.1 1585.5,674.1 1586.0,664.8 1586.5,654.2 1587.0,651.4 1587.5,656.0 1588.0,660.6 1588.5,661.6 1589.0,661.6 1589.5,657.7 1590.0,649.2 1590.5,644.2 1591.0,647.9 1591.5,655.7 1592.0,662.1 1592.5,666.9 1593.0,666.6 1593.5,659.7 1594.0,651.2 1594.5,646.6 1595.0,647.3 1595.5,649.6 1596.0,650.7 1596.5,650.9 1597.0,653.0 1597.5,660.0 1598.0,669.8 1598.5,670.9 1599.0,658.3 1599.5,650.1 1600.0,663.0 1600.5,685.2 1601.0,691.7 1601.5,681.0 1602.0,673.9 1602.5,678.9 1603.0,684.4 1603.5,681.6 1604.0,672.5 1604.5,665.9 1605.0,672.0 1605.5,685.7 1606.0,688.9 1606.5,680.1 1607.0,672.7 1607.5,671.4 1608.0,668.5 1608.5,664.3 1609.0,668.3 1609.5,673.1 1610.0,665.5 1610.5,655.6 1611.0,653.1 1611.5,651.7 1612.0,651.2 1612.5,656.4 1613.0,664.1 1613.5,670.5 1614.0,672.3 1614.5,665.4 1615.0,652.9 1615.5,641.9 1616.0,637.2 1616.5,637.1 1617.0,637.2 1617.5,641.9 1618.0,650.4 1618.5,655.7 1619.0,658.6 1619.5,658.6 1620.0,654.5 1620.5,652.4 1621.0,656.5 1621.5,660.5 1622.0,655.7 1622.5,646.2 1623.0,643.4 1623.5,647.9 1624.0,653.4 1624.5,662.5 1625.0,676.1 1625.5,686.9 1626.0,694.1 1626.5,699.5 1627.0,702.0 1627.5,698.1 1628.0,685.4 1628.5,668.2 1629.0,656.4 1629.5,653.5 1630.0,654.3 1630.5,657.3 1631.0,661.5 1631.5,665.0 1632.0,668.9 1632.5,667.7 1633.0,660.8 1633.5,657.0 1634.0,657.7 1634.5,655.2 1635.0,650.0 1635.5,650.6 1636.0,653.7 1636.5,656.3 1637.0,664.2 1637.5,669.9 1638.0,668.0 1638.5,667.6 1639.0,669.1 1639.5,667.2 1640.0,667.7 1640.5,673.2 1641.0,678.0 1641.5,680.0 1642.0,678.3 1642.5,675.8 1643.0,679.3 1643.5,680.5 1644.0,671.5 1644.5,664.9 1645.0,669.0 1645.5,675.0 1646.0,671.5 1646.5,659.3 1647.0,653.2 1647.5,660.5 1648.0,667.0 1648.5,661.6 1649.0,653.3 1649.5,650.5 1650.0,653.9 1650.5,659.8 1651.0,664.4 1651.5,671.4 1652.0,677.0 1652.5,670.1 1653.0,658.4 1653.5,659.0 1654.0,669.1 1654.5,673.5 1655.0,673.4 1655.5,672.3 1656.0,664.1 1656.5,656.3 1657.0,656.6 1657.5,656.6 1658.0,652.4 1658.5,652.0 1659.0,662.5 1659.5,675.9 1660.0,676.2 1660.5,663.1 1661.0,649.9 1661.5,642.9 1662.0,642.5 1662.5,647.6 1663.0,657.5 1663.5,670.9 1664.0,680.1 1664.5,678.0 1665.0,666.1 1665.5,654.8 1666.0,654.3 1666.5,663.9 1667.0,675.2 1667.5,681.5 1668.0,681.6 1668.5,680.2 1669.0,678.9 1669.5,673.2 1670.0,665.6 1670.5,663.8 1671.0,667.2 1671.5,670.5 1672.0,671.2 1672.5,668.4 1673.0,665.8 1673.5,670.0 1674.0,672.5 1674.5,664.2 1675.0,656.8 1675.5,658.5 1676.0,659.8 1676.5,655.4 1677.0,654.6 1677.5,661.4 1678.0,660.4 1678.5,646.0 1679.0,636.4 1679.5,641.8 1680.0,654.5 1680.5,666.3 1681.0,676.1 1681.5,681.1 1682.0,678.5 1682.5,672.5 1683.0,666.0 1683.5,660.8 1684.0,663.2 1684.5,667.6 1685.0,662.0 1685.5,654.4 1686.0,654.3 1686.5,653.2 1687.0,649.6 1687.5,648.0 1688.0,644.7 1688.5,640.7 1689.0,641.3 1689.5,645.6 1690.0,648.1 1690.5,642.5 1691.0,636.9 1691.5,647.0 1692.0,663.6 1692.5,665.3 1693.0,658.3 1693.5,657.0 1694.0,658.3 1694.5,660.6 1695.0,665.0 1695.5,664.2 1696.0,654.5 1696.5,644.5 1697.0,641.4 1697.5,644.9 1698.0,652.9 1698.5,661.4 1699.0,661.8 1699.5,654.8 1700.0,651.8 1700.5,653.0 1701.0,649.9 1701.5,645.8 1702.0,651.0 1702.5,661.7 1703.0,664.0 1703.5,658.9 1704.0,658.0 1704.5,661.5 1705.0,662.1 1705.5,659.6 1706.0,660.2 1706.5,661.5 1707.0,659.7 1707.5,658.5 1708.0,658.3 1708.5,658.2 1709.0,660.1 1709.5,661.8 1710.0,662.4 1710.5,664.0 1711.0,669.3 1711.5,672.7 1712.0,663.6 1712.5,651.2 1713.0,649.3 1713.5,649.8 1714.0,646.5 1714.5,649.1 1715.0,657.1 1715.5,658.5 1716.0,657.5 1716.5,668.0 1717.0,678.8 1717.5,670.4 1718.0,652.6 1718.5,640.6 1719.0,637.7 1719.5,644.7 1720.0,654.1 1720.5,657.2 1721.0,658.2 1721.5,663.8 1722.0,672.3 1722.5,678.7 1723.0,683.1 1723.5,687.8 1724.0,688.6 1724.5,679.7 1725.0,663.6 1725.5,648.3 1726.0,643.9 1726.5,652.6 1727.0,663.3 1727.5,667.0 1728.0,668.4 1728.5,671.2 1729.0,667.9 1729.5,659.5 1730.0,661.4 1730.5,675.6 1731.0,683.4 1731.5,673.8 1732.0,658.9 1732.5,655.2 1733.0,665.8 1733.5,680.7 1734.0,692.5 1734.5,703.0 1735.0,708.0 1735.5,703.7 1736.0,695.9 1736.5,685.7 1737.0,673.9 1737.5,666.8 1738.0,663.5 1738.5,660.4 1739.0,663.3 1739.5,675.0 1740.0,681.1 1740.5,677.1 1741.0,672.5 1741.5,664.6 1742.0,653.5 1742.5,650.4 1743.0,656.4 1743.5,662.8 1744.0,666.7 1744.5,670.9 1745.0,674.9 1745.5,674.3 1746.0,667.9 1746.5,662.3 1747.0,659.4 1747.5,656.7 1748.0,658.0 1748.5,660.3 1749.0,657.7 1749.5,656.7 1750.0,663.4 1750.5,674.1 1751.0,681.9 1751.5,680.9 1752.0,674.0 1752.5,670.4 1753.0,667.6 1753.5,660.5 1754.0,653.9 1754.5,652.8 1755.0,656.5 1755.5,661.4 1756.0,666.5 1756.5,668.8" fill="none" stroke="#e4e4e4" stroke-width="1.0" stroke-linejoin="round" clip-path="url(#circlip)"/>
<circle cx="1252.7" cy="543" r="4.2" fill="#f4f000"/>
<text x="1043.3" y="443.7" font-size="13" fill="#f0f0f0" text-anchor="end" letter-spacing="0.25">-10.0</text>
<text x="1043.3" y="513.3" font-size="13" fill="#f0f0f0" text-anchor="end" letter-spacing="0.25">-20.0</text>
<text x="1043.3" y="582.9" font-size="13" fill="#f0f0f0" text-anchor="end" letter-spacing="0.25">-30.0</text>
<text x="1043.3" y="652.5" font-size="13" fill="#f0f0f0" text-anchor="end" letter-spacing="0.25">-40.0</text>
<text x="1043.3" y="722.0999999999999" font-size="13" fill="#f0f0f0" text-anchor="end" letter-spacing="0.25">-50.0</text>
<text transform="translate(990.5,659) rotate(-90)" font-size="13.3" fill="#f0f0f0" textLength="91" lengthAdjust="spacingAndGlyphs">Magnitude (dB)</text>
</svg>
</body></html>
